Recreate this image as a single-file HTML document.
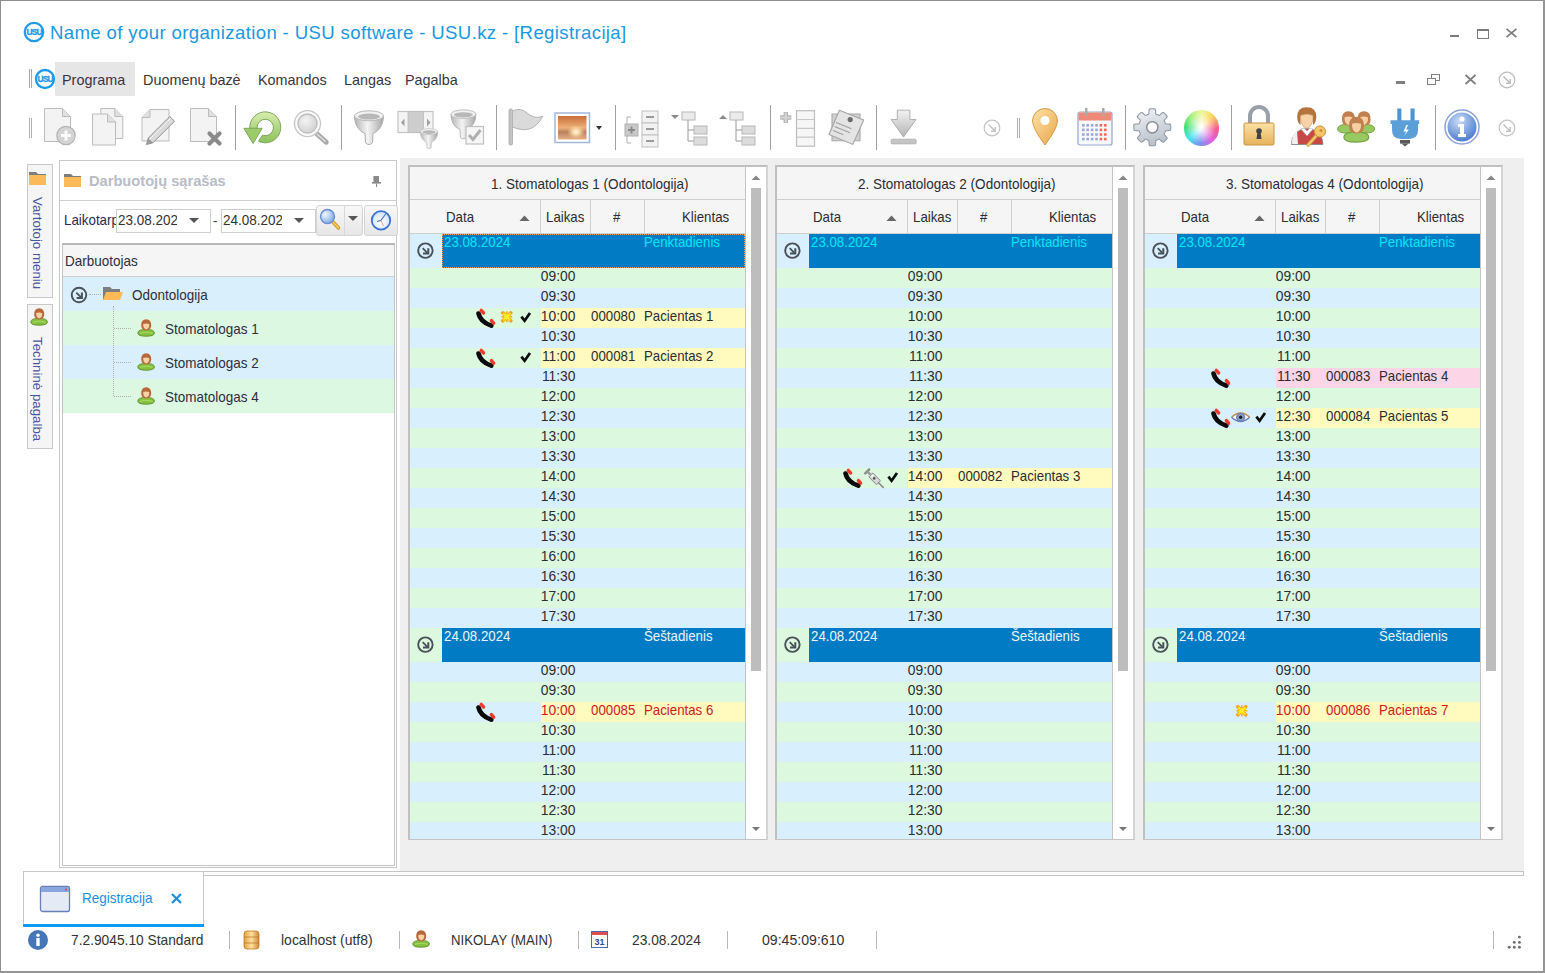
<!DOCTYPE html><html><head><meta charset="utf-8"><style>
html,body{margin:0;padding:0;}
body{width:1545px;height:973px;position:relative;overflow:hidden;background:#fff;font-family:"Liberation Sans", sans-serif;}
.t{position:absolute;white-space:pre;line-height:1;}
</style></head><body>
<div style="position:absolute;left:0px;top:0px;width:1545px;height:1px;background:#8f8f8f;"></div>
<div style="position:absolute;left:0px;top:0px;width:1px;height:973px;background:#8f8f8f;"></div>
<div style="position:absolute;left:1543px;top:0px;width:2px;height:973px;background:#959595;"></div>
<div style="position:absolute;left:0px;top:971px;width:1545px;height:2px;background:#959595;"></div>
<svg style="position:absolute;left:22px;top:20px;" width="24" height="24" viewBox="0 0 24 24"><circle cx="12" cy="12" r="9.2" fill="#fff" stroke="#1d9ae8" stroke-width="2.3"/><text x="12.2" y="15.0" font-family="Liberation Sans" font-weight="bold" font-size="8.4" fill="#1d9ae8" stroke="#1d9ae8" stroke-width="0.35" text-anchor="middle" letter-spacing="-0.7">USU</text></svg>
<div class="t" style="left:50px;top:23.86px;font-size:18.6px;color:#1b98e3;font-weight:normal;letter-spacing:0.36px;">Name of your organization - USU software - USU.kz - [Registracija]</div>
<div style="position:absolute;left:1450px;top:35px;width:9px;height:2px;background:#7a7a7a;"></div>
<div style="position:absolute;left:1477px;top:29px;width:10px;height:7px;border:1px solid #7a7a7a;border-top-width:2px;"></div>
<svg style="position:absolute;left:1505px;top:28px;" width="13" height="10" viewBox="0 0 13 10"><path d="M1.5 0.8 L11.5 9.2 M11.5 0.8 L1.5 9.2" stroke="#7a7a7a" stroke-width="1.6"/></svg>
<div style="position:absolute;left:29px;top:69px;width:1px;height:19px;background:#a8a8a8;"></div>
<div style="position:absolute;left:31px;top:69px;width:1px;height:19px;background:#a8a8a8;"></div>
<div style="position:absolute;left:55px;top:62px;width:80px;height:34px;background:#e6e6e6;"></div>
<svg style="position:absolute;left:34px;top:68px;" width="22" height="22" viewBox="0 0 22 22"><circle cx="11" cy="11" r="9.0" fill="#fff" stroke="#1d9ae8" stroke-width="2.3"/><text x="11.2" y="14.0" font-family="Liberation Sans" font-weight="bold" font-size="8.4" fill="#1d9ae8" stroke="#1d9ae8" stroke-width="0.35" text-anchor="middle" letter-spacing="-0.7">USU</text></svg>
<div class="t" style="left:62px;top:72.61px;font-size:14.4px;color:#3a3440;font-weight:normal;">Programa</div>
<div class="t" style="left:143px;top:72.61px;font-size:14.4px;color:#3a3440;font-weight:normal;">Duomenų bazė</div>
<div class="t" style="left:258px;top:72.61px;font-size:14.4px;color:#3a3440;font-weight:normal;">Komandos</div>
<div class="t" style="left:344px;top:72.61px;font-size:14.4px;color:#3a3440;font-weight:normal;">Langas</div>
<div class="t" style="left:405px;top:72.61px;font-size:14.4px;color:#3a3440;font-weight:normal;">Pagalba</div>
<div style="position:absolute;left:1396px;top:81px;width:9px;height:3px;background:#808080;"></div>
<div style="position:absolute;left:1431px;top:74px;width:7px;height:5px;border:1.5px solid #808080;"></div>
<div style="position:absolute;left:1427px;top:78px;width:7px;height:5px;border:1.5px solid #808080;background:#fff;"></div>
<svg style="position:absolute;left:1464px;top:74px;" width="13" height="11" viewBox="0 0 13 11"><path d="M1.5 1 L11.5 10 M11.5 1 L1.5 10" stroke="#808080" stroke-width="1.8"/></svg>
<svg style="position:absolute;left:1497px;top:70px;" width="20" height="20" viewBox="0 0 20 20"><circle cx="10" cy="10" r="7.8" fill="none" stroke="#bdbdbd" stroke-width="1.2"/><path d="M6.5 6.5 L13 13 M13.2 9 L13.2 13.2 L9 13.2" stroke="#bdbdbd" stroke-width="1.5" fill="none"/></svg>
<div style="position:absolute;left:29px;top:118px;width:1px;height:20px;background:#b0b0b0;"></div>
<div style="position:absolute;left:31px;top:118px;width:1px;height:20px;background:#b0b0b0;"></div>
<div style="position:absolute;left:235px;top:105px;width:1px;height:45px;background:#a0a0a0;"></div>
<div style="position:absolute;left:341px;top:105px;width:1px;height:45px;background:#a0a0a0;"></div>
<div style="position:absolute;left:496px;top:105px;width:1px;height:45px;background:#a0a0a0;"></div>
<div style="position:absolute;left:615px;top:105px;width:1px;height:45px;background:#a0a0a0;"></div>
<div style="position:absolute;left:770px;top:105px;width:1px;height:45px;background:#a0a0a0;"></div>
<div style="position:absolute;left:876px;top:105px;width:1px;height:45px;background:#a0a0a0;"></div>
<div style="position:absolute;left:1125px;top:105px;width:1px;height:45px;background:#a0a0a0;"></div>
<div style="position:absolute;left:1231px;top:105px;width:1px;height:45px;background:#a0a0a0;"></div>
<div style="position:absolute;left:1435px;top:105px;width:1px;height:45px;background:#a0a0a0;"></div>
<div style="position:absolute;left:1017px;top:118px;width:1px;height:20px;background:#b0b0b0;"></div>
<div style="position:absolute;left:1019px;top:118px;width:1px;height:20px;background:#b0b0b0;"></div>
<svg style="position:absolute;left:40px;top:105px;" width="40" height="44" viewBox="0 0 40 44"><path d="M4.5 3.5 L22.5 3.5 L30.5 11.5 L30.5 36.5 L4.5 36.5 Z" fill="#f3f3f3" stroke="#bcbcbc" stroke-width="1"/><path d="M22.5 3.5 L22.5 11.5 L30.5 11.5" fill="#e0e0e0" stroke="#bcbcbc" stroke-width="1"/><circle cx="26" cy="30.5" r="9.2" fill="#d4d4d4" stroke="#b4b4b4" stroke-width="1.2"/><path d="M26 25.5 V35.5 M21 30.5 H31" stroke="#fbfbfb" stroke-width="3"/></svg>
<svg style="position:absolute;left:88px;top:105px;" width="40" height="44" viewBox="0 0 40 44"><path d="M12.8 3.5 L26.799999999999997 3.5 L34.8 11.5 L34.8 33.5 L12.8 33.5 Z" fill="#f3f3f3" stroke="#bcbcbc" stroke-width="1"/><path d="M26.799999999999997 3.5 L26.799999999999997 11.5 L34.8 11.5" fill="#e0e0e0" stroke="#bcbcbc" stroke-width="1"/><path d="M4.5 9 L19.5 9 L27.5 17 L27.5 40 L4.5 40 Z" fill="#f3f3f3" stroke="#bcbcbc" stroke-width="1"/><path d="M19.5 9 L19.5 17 L27.5 17" fill="#e0e0e0" stroke="#bcbcbc" stroke-width="1"/></svg>
<svg style="position:absolute;left:137px;top:105px;" width="42" height="44" viewBox="0 0 42 44"><path d="M13 4.5 L32 4.5 L32 36.0 L5 36.0 L5 12.5 Z" fill="#f3f3f3" stroke="#bcbcbc" stroke-width="1"/><path d="M13 4.5 L13 12.5 L5 12.5" fill="#e0e0e0" stroke="#bcbcbc" stroke-width="1"/><path d="M9.5 39.5 L11.3 33 L32.8 11.5 L37.5 16.2 L16 37.7 Z" fill="#dadada" stroke="#8e8e8e" stroke-width="1"/><path d="M9.5 39.5 L11.3 33 L16 37.7 Z" fill="#9a9a9a"/><path d="M12.5 34.5 L34 13" stroke="#f4f4f4" stroke-width="1"/></svg>
<svg style="position:absolute;left:186px;top:105px;" width="40" height="44" viewBox="0 0 40 44"><path d="M4.5 3.5 L22.5 3.5 L30.5 11.5 L30.5 36.5 L4.5 36.5 Z" fill="#f3f3f3" stroke="#bcbcbc" stroke-width="1"/><path d="M22.5 3.5 L22.5 11.5 L30.5 11.5" fill="#e0e0e0" stroke="#bcbcbc" stroke-width="1"/><path d="M23.5 28.5 L33.5 38.5 M33.5 28.5 L23.5 38.5" stroke="#8a8a8a" stroke-width="4.2" stroke-linecap="round"/></svg>
<svg style="position:absolute;left:241px;top:105px;" width="44" height="44" viewBox="0 0 44 44"><defs><linearGradient id="gr" x1="0" y1="0" x2="0" y2="1"><stop offset="0" stop-color="#d8edb0"/><stop offset="1" stop-color="#8cc05a"/></linearGradient></defs><path d="M8.8 23.3 A15.5 15.5 0 1 1 17.5 36.3 L21.5 30.2 A8.2 8.2 0 1 0 16.1 23.3 Z" fill="url(#gr)" stroke="#7ea85a" stroke-width="1"/><path d="M2.9 23.3 L21.1 23.3 L12.1 38.5 Z" fill="#9ccc68" stroke="#7ea85a" stroke-width="1"/></svg>
<svg style="position:absolute;left:292px;top:105px;" width="40" height="44" viewBox="0 0 40 44"><defs><radialGradient id="lens" cx="0.4" cy="0.35" r="0.7"><stop offset="0" stop-color="#f4f4f4"/><stop offset="1" stop-color="#cfcfcf"/></radialGradient></defs><path d="M24.4 28.3 L34.2 37.2" stroke="#a9a9a9" stroke-width="5" stroke-linecap="round"/><path d="M25.5 29.5 L33 36.2" stroke="#dcdcdc" stroke-width="1.6" stroke-linecap="round"/><circle cx="15.5" cy="18.6" r="13" fill="#fbfbfb" stroke="#c6c6c6" stroke-width="1.3"/><circle cx="15.5" cy="18.6" r="9.6" fill="url(#lens)" stroke="#bcbcbc" stroke-width="1.3"/></svg>
<svg style="position:absolute;left:350px;top:105px;" width="38" height="44" viewBox="0 0 38 44"><defs><linearGradient id="fg1" x1="0" y1="0" x2="1" y2="0"><stop offset="0" stop-color="#b4b4b4"/><stop offset="0.45" stop-color="#f4f4f4"/><stop offset="1" stop-color="#a6a6a6"/></linearGradient></defs><g transform="translate(4,4.8) scale(1.0)"><path d="M0.5 6 C0.5 17, 7 22.5, 11 23.5 L11.5 33 Q15 36.5 18.5 33 L19 23.5 C23 22.5, 29.5 17, 29.5 6 Z" fill="url(#fg1)" stroke="#b0b0b0" stroke-width="1"/><ellipse cx="15" cy="6" rx="14.5" ry="5" fill="#f2f2f2" stroke="#b8b8b8" stroke-width="1"/><ellipse cx="15" cy="6.8" rx="11" ry="3" fill="#b8b8b8"/></g></svg>
<svg style="position:absolute;left:395px;top:105px;" width="46" height="44" viewBox="0 0 46 44"><defs><linearGradient id="fg2" x1="0" y1="0" x2="1" y2="0"><stop offset="0" stop-color="#b4b4b4"/><stop offset="0.45" stop-color="#f4f4f4"/><stop offset="1" stop-color="#a6a6a6"/></linearGradient></defs><rect x="3" y="6.5" width="35" height="21" fill="#f4f4f4" stroke="#c4c4c4" stroke-width="1.2"/><rect x="13" y="6.5" width="15.5" height="21" fill="#cdcdcd" stroke="#bdbdbd" stroke-width="0.8"/><path d="M9.5 13.5 L6 17.5 L9.5 21.5 Z M32 13.5 L35.5 17.5 L32 21.5 Z" fill="#a0a0a0"/><g transform="translate(25,23) scale(0.6)"><path d="M0.5 6 C0.5 17, 7 22.5, 11 23.5 L11.5 33 Q15 36.5 18.5 33 L19 23.5 C23 22.5, 29.5 17, 29.5 6 Z" fill="url(#fg2)" stroke="#b0b0b0" stroke-width="1"/><ellipse cx="15" cy="6" rx="14.5" ry="5" fill="#f2f2f2" stroke="#b8b8b8" stroke-width="1"/><ellipse cx="15" cy="6.8" rx="11" ry="3" fill="#b8b8b8"/></g></svg>
<svg style="position:absolute;left:447px;top:105px;" width="42" height="44" viewBox="0 0 42 44"><defs><linearGradient id="fg3" x1="0" y1="0" x2="1" y2="0"><stop offset="0" stop-color="#b4b4b4"/><stop offset="0.45" stop-color="#f4f4f4"/><stop offset="1" stop-color="#a6a6a6"/></linearGradient></defs><g transform="translate(3.5,4) scale(0.86)"><path d="M0.5 6 C0.5 17, 7 22.5, 11 23.5 L11.5 33 Q15 36.5 18.5 33 L19 23.5 C23 22.5, 29.5 17, 29.5 6 Z" fill="url(#fg3)" stroke="#b0b0b0" stroke-width="1"/><ellipse cx="15" cy="6" rx="14.5" ry="5" fill="#f2f2f2" stroke="#b8b8b8" stroke-width="1"/><ellipse cx="15" cy="6.8" rx="11" ry="3" fill="#b8b8b8"/></g><rect x="19" y="21.5" width="17.5" height="17.5" fill="#f6f6f6" stroke="#c0c0c0" stroke-width="1.2"/><path d="M22 30 L26 34.5 L33.5 25" stroke="#b0b0b0" stroke-width="3" fill="none"/></svg>
<svg style="position:absolute;left:505px;top:105px;" width="42" height="44" viewBox="0 0 42 44"><rect x="4" y="4" width="3.5" height="36" rx="1.5" fill="#c4c4c4" stroke="#a8a8a8" stroke-width="0.8"/><path d="M7.5 6 Q16 2 22 8 Q30 15 38 11 Q32 22 24 24 Q17 26 7.5 22 Z" fill="#dadada" stroke="#b4b4b4"/></svg>
<svg style="position:absolute;left:552px;top:105px;" width="52" height="44" viewBox="0 0 52 44"><defs><linearGradient id="sun" x1="0" y1="0" x2="0" y2="1"><stop offset="0" stop-color="#c86e3c"/><stop offset="0.5" stop-color="#eeb07a"/><stop offset="0.68" stop-color="#b88060"/><stop offset="1" stop-color="#e8b088"/></linearGradient><radialGradient id="glow" cx="0.5" cy="0.5" r="0.5"><stop offset="0" stop-color="#fffbe8"/><stop offset="0.4" stop-color="#ffe8b0" stop-opacity="0.8"/><stop offset="1" stop-color="#ffd090" stop-opacity="0"/></radialGradient></defs><rect x="3" y="8" width="34.5" height="29.5" fill="#fff" stroke="#a4b6dc" stroke-width="1.5"/><rect x="6" y="11" width="28.5" height="23.5" fill="url(#sun)"/><ellipse cx="24" cy="27" rx="9" ry="7" fill="url(#glow)"/><path d="M44 21 L50 21 L47 25 Z" fill="#333"/></svg>
<svg style="position:absolute;left:622px;top:105px;" width="42" height="44" viewBox="0 0 42 44"><path d="M9 12 L5 12 L5 38 L9 38" stroke="#b0b0b0" fill="none"/><rect x="3" y="19" width="13" height="12" fill="#c8c8c8" stroke="#b0b0b0"/><path d="M9.5 21.5 V28.5 M6 25 H13" stroke="#8a8a8a" stroke-width="2"/><rect x="20" y="6" width="16" height="12" fill="#f2f2f2" stroke="#c0c0c0"/><rect x="20" y="18" width="16" height="12" fill="#f2f2f2" stroke="#c0c0c0"/><rect x="20" y="30" width="16" height="12" fill="#f2f2f2" stroke="#c0c0c0"/><path d="M24 12 H32 M24 24 H32 M24 36 H32" stroke="#9a9a9a" stroke-width="2"/></svg>
<svg style="position:absolute;left:670px;top:102px;" width="40" height="46" viewBox="0 0 40 46"><path d="M1 13 L9 13 L5 17 Z" fill="#8a8a8a"/><rect x="12" y="10" width="13" height="8" fill="#eaeaea" stroke="#b8b8b8"/><path d="M18 18 V39 H24 M18 28 H24" stroke="#9a9a9a" fill="none"/><rect x="24" y="24" width="13" height="8" fill="#dcdcdc" stroke="#b8b8b8"/><rect x="24" y="35" width="13" height="8" fill="#dcdcdc" stroke="#b8b8b8"/></svg>
<svg style="position:absolute;left:718px;top:102px;" width="40" height="46" viewBox="0 0 40 46"><path d="M1 17 L9 17 L5 13 Z" fill="#8a8a8a"/><rect x="12" y="10" width="13" height="8" fill="#eaeaea" stroke="#b8b8b8"/><path d="M18 18 V39 H24 M18 28 H24" stroke="#9a9a9a" fill="none"/><rect x="24" y="24" width="13" height="8" fill="#dcdcdc" stroke="#b8b8b8"/><rect x="24" y="35" width="13" height="8" fill="#dcdcdc" stroke="#b8b8b8"/></svg>
<svg style="position:absolute;left:776px;top:105px;" width="42" height="44" viewBox="0 0 42 44"><path d="M9.8 7 V18 M4.3 12.5 H15.3" stroke="#b4b4b4" stroke-width="4.4"/><path d="M9.8 7.6 V17.4 M4.9 12.5 H14.7" stroke="#d4d4d4" stroke-width="2"/><rect x="20.5" y="5.7" width="18" height="35.5" fill="#f6f6f6" stroke="#bdbdbd" stroke-width="1.2"/><path d="M20.5 14.5 H38.5 M20.5 23.3 H38.5 M20.5 32.2 H38.5" stroke="#c8c8c8" stroke-width="1.2"/></svg>
<svg style="position:absolute;left:826px;top:105px;" width="42" height="44" viewBox="0 0 42 44"><path d="M6 9 L34 9 L34 35.7 L6 35.7 Z" fill="#d0d0d0" stroke="#a8a8a8" stroke-width="1.1"/><path d="M13.4 5.2 L37.7 15 L26.8 39.4 L3 29.5 Z" fill="#e4e4e4" stroke="#a4a4a4" stroke-width="1.1"/><circle cx="24.2" cy="14.6" r="2.6" fill="#6a6a6a"/><path d="M10 17.5 L25.5 23.8 M8.5 21.5 L24 27.8 M7 25.5 L17.5 29.7" stroke="#a0a0a0" stroke-width="1.2"/></svg>
<svg style="position:absolute;left:888px;top:105px;" width="32" height="44" viewBox="0 0 32 44"><defs><linearGradient id="dl" x1="0" y1="0" x2="0" y2="1"><stop offset="0" stop-color="#f2f2f2"/><stop offset="1" stop-color="#b4b4b4"/></linearGradient></defs><path d="M9.3 5.2 H21.8 V14.5 H28 L15.5 32.1 L3.1 14.5 H9.3 Z" fill="url(#dl)" stroke="#b0b0b0" stroke-width="1"/><rect x="3.1" y="34.2" width="25" height="4.7" rx="1" fill="#c4c4c4" stroke="#b0b0b0" stroke-width="0.8"/></svg>
<svg style="position:absolute;left:982px;top:118px;" width="20" height="20" viewBox="0 0 20 20"><circle cx="10" cy="10" r="7.8" fill="none" stroke="#c4c4c4" stroke-width="1.2"/><path d="M6.5 6.5 L13 13 M13.2 9 L13.2 13.2 L9 13.2" stroke="#c4c4c4" stroke-width="1.5" fill="none"/></svg>
<svg style="position:absolute;left:1029px;top:105px;" width="34" height="44" viewBox="0 0 34 44"><defs><linearGradient id="pin" x1="0" y1="0" x2="1" y2="1"><stop offset="0" stop-color="#fde3a8"/><stop offset="1" stop-color="#e9a64a"/></linearGradient></defs><path d="M16 40 Q4 24 3.5 16 A12.5 12.5 0 0 1 28.5 16 Q28 24 16 40 Z" fill="url(#pin)" stroke="#d59a45" stroke-width="1"/><circle cx="16" cy="15.5" r="4.5" fill="#fff"/></svg>
<svg style="position:absolute;left:1075px;top:104px;" width="40" height="44" viewBox="0 0 40 44"><rect x="3" y="8" width="34" height="33" rx="2" fill="#f6f8fc" stroke="#95a7cf" stroke-width="1.2"/><rect x="3.5" y="8.5" width="33" height="8" fill="#f08a78"/><rect x="10" y="4" width="2.5" height="8" fill="#aaa"/><rect x="27" y="4" width="2.5" height="8" fill="#aaa"/><rect x="7.0" y="20.0" width="2.6" height="2.6" fill="#9aa9d6"/><rect x="11.4" y="20.0" width="2.6" height="2.6" fill="#9aa9d6"/><rect x="15.8" y="20.0" width="2.6" height="2.6" fill="#9aa9d6"/><rect x="20.2" y="20.0" width="2.6" height="2.6" fill="#9aa9d6"/><rect x="24.6" y="20.0" width="2.6" height="2.6" fill="#f26a5a"/><rect x="29.0" y="20.0" width="2.6" height="2.6" fill="#f26a5a"/><rect x="7.0" y="24.6" width="2.6" height="2.6" fill="#9aa9d6"/><rect x="11.4" y="24.6" width="2.6" height="2.6" fill="#9aa9d6"/><rect x="15.8" y="24.6" width="2.6" height="2.6" fill="#9aa9d6"/><rect x="20.2" y="24.6" width="2.6" height="2.6" fill="#9aa9d6"/><rect x="24.6" y="24.6" width="2.6" height="2.6" fill="#f26a5a"/><rect x="29.0" y="24.6" width="2.6" height="2.6" fill="#f26a5a"/><rect x="7.0" y="29.2" width="2.6" height="2.6" fill="#9aa9d6"/><rect x="11.4" y="29.2" width="2.6" height="2.6" fill="#9aa9d6"/><rect x="15.8" y="29.2" width="2.6" height="2.6" fill="#9aa9d6"/><rect x="20.2" y="29.2" width="2.6" height="2.6" fill="#9aa9d6"/><rect x="24.6" y="29.2" width="2.6" height="2.6" fill="#f26a5a"/><rect x="29.0" y="29.2" width="2.6" height="2.6" fill="#f26a5a"/><rect x="7.0" y="33.8" width="2.6" height="2.6" fill="#9aa9d6"/><rect x="11.4" y="33.8" width="2.6" height="2.6" fill="#9aa9d6"/><rect x="15.8" y="33.8" width="2.6" height="2.6" fill="#9aa9d6"/><rect x="20.2" y="33.8" width="2.6" height="2.6" fill="#9aa9d6"/><rect x="24.6" y="33.8" width="2.6" height="2.6" fill="#f26a5a"/><rect x="29.0" y="33.8" width="2.6" height="2.6" fill="#f26a5a"/></svg>
<svg style="position:absolute;left:1133px;top:105px;" width="40" height="44" viewBox="0 0 40 44"><defs><linearGradient id="gg" x1="0" y1="0" x2="0.3" y2="1"><stop offset="0" stop-color="#f2f4f8"/><stop offset="1" stop-color="#bcc2cc"/></linearGradient></defs><g transform="translate(19.3,22.3)"><polygon points="18.50,0.00 18.49,0.48 18.47,0.97 18.44,1.45 18.40,1.93 18.34,2.41 18.24,2.89 17.31,3.21 15.66,3.33 14.07,3.38 13.18,3.53 13.04,3.86 12.93,4.20 12.82,4.54 12.70,4.87 12.56,5.20 12.42,5.53 12.28,5.85 12.12,6.17 11.95,6.49 11.82,6.82 12.33,7.56 13.43,8.72 14.51,9.97 14.94,10.86 14.68,11.26 14.38,11.64 14.07,12.01 13.75,12.38 13.42,12.73 13.08,13.08 12.73,13.42 12.38,13.75 12.01,14.07 11.64,14.38 11.26,14.68 10.86,14.94 9.97,14.51 8.72,13.43 7.56,12.33 6.82,11.82 6.49,11.95 6.17,12.12 5.85,12.28 5.53,12.42 5.20,12.56 4.87,12.70 4.54,12.82 4.20,12.93 3.86,13.04 3.53,13.18 3.38,14.07 3.33,15.66 3.21,17.31 2.89,18.24 2.41,18.34 1.93,18.40 1.45,18.44 0.97,18.47 0.48,18.49 0.00,18.50 -0.48,18.49 -0.97,18.47 -1.45,18.44 -1.93,18.40 -2.41,18.34 -2.89,18.24 -3.21,17.31 -3.33,15.66 -3.38,14.07 -3.53,13.18 -3.86,13.04 -4.20,12.93 -4.54,12.82 -4.87,12.70 -5.20,12.56 -5.53,12.42 -5.85,12.28 -6.17,12.12 -6.49,11.95 -6.82,11.82 -7.56,12.33 -8.72,13.43 -9.97,14.51 -10.86,14.94 -11.26,14.68 -11.64,14.38 -12.01,14.07 -12.38,13.75 -12.73,13.42 -13.08,13.08 -13.42,12.73 -13.75,12.38 -14.07,12.01 -14.38,11.64 -14.68,11.26 -14.94,10.86 -14.51,9.97 -13.43,8.72 -12.33,7.56 -11.82,6.82 -11.95,6.49 -12.12,6.17 -12.28,5.85 -12.42,5.53 -12.56,5.20 -12.70,4.87 -12.82,4.54 -12.93,4.20 -13.04,3.86 -13.18,3.53 -14.07,3.38 -15.66,3.33 -17.31,3.21 -18.24,2.89 -18.34,2.41 -18.40,1.93 -18.44,1.45 -18.47,0.97 -18.49,0.48 -18.50,0.00 -18.49,-0.48 -18.47,-0.97 -18.44,-1.45 -18.40,-1.93 -18.34,-2.41 -18.24,-2.89 -17.31,-3.21 -15.66,-3.33 -14.07,-3.38 -13.18,-3.53 -13.04,-3.86 -12.93,-4.20 -12.82,-4.54 -12.70,-4.87 -12.56,-5.20 -12.42,-5.53 -12.28,-5.85 -12.12,-6.17 -11.95,-6.49 -11.82,-6.82 -12.33,-7.56 -13.43,-8.72 -14.51,-9.97 -14.94,-10.86 -14.68,-11.26 -14.38,-11.64 -14.07,-12.01 -13.75,-12.38 -13.42,-12.73 -13.08,-13.08 -12.73,-13.42 -12.38,-13.75 -12.01,-14.07 -11.64,-14.38 -11.26,-14.68 -10.86,-14.94 -9.97,-14.51 -8.72,-13.43 -7.56,-12.33 -6.82,-11.82 -6.49,-11.95 -6.17,-12.12 -5.85,-12.28 -5.53,-12.42 -5.20,-12.56 -4.87,-12.70 -4.54,-12.82 -4.20,-12.93 -3.86,-13.04 -3.53,-13.18 -3.38,-14.07 -3.33,-15.66 -3.21,-17.31 -2.89,-18.24 -2.41,-18.34 -1.93,-18.40 -1.45,-18.44 -0.97,-18.47 -0.48,-18.49 -0.00,-18.50 0.48,-18.49 0.97,-18.47 1.45,-18.44 1.93,-18.40 2.41,-18.34 2.89,-18.24 3.21,-17.31 3.33,-15.66 3.38,-14.07 3.53,-13.18 3.86,-13.04 4.20,-12.93 4.54,-12.82 4.87,-12.70 5.20,-12.56 5.53,-12.42 5.85,-12.28 6.17,-12.12 6.49,-11.95 6.82,-11.82 7.56,-12.33 8.72,-13.43 9.97,-14.51 10.86,-14.94 11.26,-14.68 11.64,-14.38 12.01,-14.07 12.38,-13.75 12.73,-13.42 13.08,-13.08 13.42,-12.73 13.75,-12.38 14.07,-12.01 14.38,-11.64 14.68,-11.26 14.94,-10.86 14.51,-9.97 13.43,-8.72 12.33,-7.56 11.82,-6.82 11.95,-6.49 12.12,-6.17 12.28,-5.85 12.42,-5.53 12.56,-5.20 12.70,-4.87 12.82,-4.54 12.93,-4.20 13.04,-3.86 13.18,-3.53 14.07,-3.38 15.66,-3.33 17.31,-3.21 18.24,-2.89 18.34,-2.41 18.40,-1.93 18.44,-1.45 18.47,-0.97 18.49,-0.48" fill="url(#gg)" stroke="#939aa6" stroke-width="1.1"/><circle r="5.6" fill="#fff" stroke="#8a919c" stroke-width="1.5"/></g></svg>
<div style="position:absolute;left:1183.5px;top:110px;width:35.5px;height:35.5px;border-radius:50%;background:radial-gradient(circle at 48% 50%, #fff 0%, rgba(255,255,255,0.85) 12%, rgba(255,255,255,0) 60%), conic-gradient(#eef8a0, #ffd860 40deg, #f45890 95deg, #e060e0 140deg, #7a90f0 185deg, #40e4f0 230deg, #40e070 275deg, #a8f080 320deg, #eef8a0);"></div>
<svg style="position:absolute;left:1240px;top:103px;" width="38" height="46" viewBox="0 0 38 46"><path d="M10 20 V13 A9 9 0 0 1 28 13 V20" fill="none" stroke="#9aa0a8" stroke-width="4"/><defs><linearGradient id="lk" x1="0" y1="0" x2="0" y2="1"><stop offset="0" stop-color="#fbe2a4"/><stop offset="1" stop-color="#e6b35c"/></linearGradient></defs><rect x="4" y="20" width="30" height="22" rx="1.5" fill="url(#lk)" stroke="#c99240"/><circle cx="19" cy="28" r="2.8" fill="#444"/><path d="M17.5 29 L16.5 36 H21.5 L20.5 29 Z" fill="#444"/></svg>
<svg style="position:absolute;left:1288px;top:103px;" width="42" height="46" viewBox="0 0 42 46"><path d="M3.5 41.5 Q3.5 27 19 25.5 Q34.5 27 35 41.5 Z" fill="#c84848" stroke="#8a8a8a" stroke-width="0.9"/><path d="M3.8 41 Q4 30 9 28 L10 41 Z" fill="#f0f0f0"/><path d="M13 26 L19 33 L25 26 L22 25 L19 28 L16 25 Z" fill="#fff" stroke="#aaa" stroke-width="0.6"/><path d="M9.2 14 Q9 4.2 18.8 4.2 Q28.5 4.2 28.3 14 Q28 20 25 22 L25 13 Q19 10 12.5 13 L12.5 22 Q9.4 20 9.2 14 Z" fill="#b5733e"/><path d="M12.5 12.5 Q19 9.5 25 12.5 Q25.5 23 18.8 25.5 Q12 23 12.5 12.5 Z" fill="#f6d2a6" stroke="#c0906a" stroke-width="0.6"/><path d="M29 32 L20 42" stroke="#d8a040" stroke-width="3.6" stroke-linecap="round"/><path d="M29 32 L20 42" stroke="#f8d070" stroke-width="1.6" stroke-linecap="round"/><circle cx="32" cy="28.5" r="5.6" fill="#f4c668" stroke="#c8923a" stroke-width="1"/><circle cx="33" cy="27.5" r="1.5" fill="#c8923a"/></svg>
<svg style="position:absolute;left:1334px;top:103px;" width="44" height="46" viewBox="0 0 44 46"><g transform="translate(2.5,7.8) scale(1.3)"><path d="M0.8 14 Q0.8 10.4 9 10.4 Q17.4 10.4 17.4 14 Q17.4 17.2 9 17.2 Q0.8 17.2 0.8 14 Z" fill="#98c860" stroke="#6e9e40" stroke-width="0.7"/><path d="M4.2 6.8 Q4 0.3 9.2 0.3 Q14.4 0.3 14.2 6.8 Q14 10 12 10.8 Q9 12 6.3 10.8 Q4.4 10 4.2 6.8 Z" fill="#c08050"/><path d="M6.2 5 Q9 3.8 12.2 5 Q12.6 9.8 9.2 11 Q6 9.8 6.2 5 Z" fill="#f6d0a2"/></g><g transform="translate(18.1,7.8) scale(1.3)"><path d="M0.8 14 Q0.8 10.4 9 10.4 Q17.4 10.4 17.4 14 Q17.4 17.2 9 17.2 Q0.8 17.2 0.8 14 Z" fill="#98c860" stroke="#6e9e40" stroke-width="0.7"/><path d="M4.2 6.8 Q4 0.3 9.2 0.3 Q14.4 0.3 14.2 6.8 Q14 10 12 10.8 Q9 12 6.3 10.8 Q4.4 10 4.2 6.8 Z" fill="#c08050"/><path d="M6.2 5 Q9 3.8 12.2 5 Q12.6 9.8 9.2 11 Q6 9.8 6.2 5 Z" fill="#f6d0a2"/></g><g transform="translate(8.7,13.3) scale(1.5)"><path d="M0.8 14 Q0.8 10.4 9 10.4 Q17.4 10.4 17.4 14 Q17.4 17.2 9 17.2 Q0.8 17.2 0.8 14 Z" fill="#98c860" stroke="#6e9e40" stroke-width="0.7"/><path d="M4.2 6.8 Q4 0.3 9.2 0.3 Q14.4 0.3 14.2 6.8 Q14 10 12 10.8 Q9 12 6.3 10.8 Q4.4 10 4.2 6.8 Z" fill="#c08050"/><path d="M6.2 5 Q9 3.8 12.2 5 Q12.6 9.8 9.2 11 Q6 9.8 6.2 5 Z" fill="#f6d0a2"/></g></svg>
<svg style="position:absolute;left:1388px;top:103px;" width="34" height="48" viewBox="0 0 34 48"><rect x="9.3" y="5.5" width="4.1" height="13" fill="#4f94d0"/><rect x="22.5" y="5.5" width="4.1" height="13" fill="#4f94d0"/><path d="M2.5 17.3 H31.2 V21 H30 V27 Q30 35.9 21 35.9 H13 Q4 35.9 4 27 V21 H2.5 Z" fill="#5c9fd8"/><path d="M18.5 22 L15.5 28.5 H18.3 L16.3 33 L20.8 26.5 H18 L20 22 Z" fill="#fff"/><rect x="12" y="37" width="10" height="3.6" fill="#5a5a5a"/><path d="M13.5 40.5 H20.5 L17 43.5 Z" fill="#5a5a5a"/></svg>
<svg style="position:absolute;left:1442px;top:105px;" width="40" height="44" viewBox="0 0 40 44"><defs><radialGradient id="inf" cx="0.4" cy="0.3" r="0.8"><stop offset="0" stop-color="#c8dcf8"/><stop offset="1" stop-color="#3f70c8"/></radialGradient></defs><circle cx="20" cy="22" r="17" fill="#fff" stroke="#8aa4d8" stroke-width="1.5"/><circle cx="20" cy="22" r="14.5" fill="url(#inf)"/><circle cx="20" cy="14" r="2.6" fill="#fff"/><path d="M16 19 H22 V29 H24 V32 H16 V29 H18 V22 H16 Z" fill="#fff"/></svg>
<svg style="position:absolute;left:1497px;top:118px;" width="20" height="20" viewBox="0 0 20 20"><circle cx="10" cy="10" r="7.8" fill="none" stroke="#c4c4c4" stroke-width="1.2"/><path d="M6.5 6.5 L13 13 M13.2 9 L13.2 13.2 L9 13.2" stroke="#c4c4c4" stroke-width="1.5" fill="none"/></svg>
<div style="position:absolute;left:400px;top:158px;width:1124px;height:713px;background:#efefef;"></div>
<div style="position:absolute;left:23px;top:871px;width:1501px;height:1px;background:#c4c4c4;"></div>
<div style="position:absolute;left:203px;top:875px;width:1321px;height:1px;background:#c4c4c4;"></div>
<div style="position:absolute;left:1523px;top:871px;width:1px;height:5px;background:#c4c4c4;"></div>
<div style="position:absolute;left:27px;top:164px;width:24px;height:132px;border:1px solid #c8c8c8;background:#f5f5f5;"></div>
<svg style="position:absolute;left:28px;top:170px;" width="20" height="16" viewBox="0 0 20 16"><path d="M1 2 H8 L10 4 H18 V15 H1 Z" fill="#7d7d7d"/><rect x="1" y="5" width="17" height="10" fill="#fbb957"/></svg>
<div class="t" style="left:31px;top:197px;font-size:13.3px;color:#4656a0;writing-mode:vertical-rl;">Vartotojo meniu</div>
<div style="position:absolute;left:27px;top:304px;width:24px;height:143px;border:1px solid #c8c8c8;background:#f5f5f5;"></div>
<svg style="position:absolute;left:29px;top:307px;" width="20" height="20" viewBox="0 0 20 20"><g transform="translate(1,1) scale(1.0)"><path d="M0.8 14 Q0.8 10.4 9 10.4 Q17.4 10.4 17.4 14 Q17.4 17.2 9 17.2 Q0.8 17.2 0.8 14 Z" fill="#86c040" stroke="#5a8e2c" stroke-width="0.9"/><path d="M3 14.5 Q9 12 15.5 14.5" stroke="#a8dc60" stroke-width="1.2" fill="none"/><path d="M4.2 6.8 Q4 0.3 9.2 0.3 Q14.4 0.3 14.2 6.8 Q14 10 12 10.8 Q9 12 6.3 10.8 Q4.4 10 4.2 6.8 Z" fill="#b8683a"/><path d="M6.2 5 Q9 3.8 12.2 5 Q12.6 9.5 9.2 10.6 Q6 9.5 6.2 5 Z" fill="#f6d2a4"/></g></svg>
<div class="t" style="left:31px;top:337px;font-size:13.3px;color:#4656a0;writing-mode:vertical-rl;">Techninė pagalba</div>
<div style="position:absolute;left:59px;top:160px;width:336px;height:706px;border:1px solid #c8c8c8;background:#fff;"></div>
<div style="position:absolute;left:60px;top:200px;width:336px;height:1px;background:#d0d0d0;"></div>
<svg style="position:absolute;left:63px;top:172px;" width="20" height="16" viewBox="0 0 20 16"><path d="M1 2 H8 L10 4 H18 V15 H1 Z" fill="#7d7d7d"/><rect x="1" y="5" width="17" height="10" fill="#fbb957"/></svg>
<div class="t" style="left:89px;top:173.87px;font-size:14.8px;color:#b8bcc6;font-weight:bold;transform:scaleX(0.99);transform-origin:0 0;">Darbuotojų sąrašas</div>
<svg style="position:absolute;left:371px;top:175px;" width="12" height="13" viewBox="0 0 12 13"><rect x="3" y="1" width="5" height="6" fill="#8a8a8a"/><rect x="2" y="1" width="1" height="6" fill="#bbb"/><rect x="1" y="7" width="9" height="1.6" fill="#8a8a8a"/><rect x="5" y="8.5" width="1.1" height="3.5" fill="#8a8a8a"/></svg>
<div class="t" style="left:64px;top:212.98px;font-size:14.2px;color:#2a2a55;font-weight:normal;transform:scaleX(0.94);transform-origin:0 0;">Laikotarp</div>
<div style="position:absolute;left:116px;top:209px;width:93px;height:22px;border:1px solid #cfcfcf;background:#fff;overflow:hidden;"><div class="t" style="left:1px;top:3px;font-size:14.2px;color:#333;transform:scaleX(0.95);transform-origin:0 0;">23.08.2024</div></div>
<div style="position:absolute;left:177px;top:211px;width:10px;height:19px;background:#fff;"></div>
<svg style="position:absolute;left:188px;top:217px;" width="12" height="8" viewBox="0 0 12 8"><path d="M1 1 H11 L6 6 Z" fill="#555"/></svg>
<div class="t" style="left:213px;top:213.74px;font-size:13.3px;color:#333;font-weight:normal;">-</div>
<div style="position:absolute;left:221px;top:209px;width:93px;height:22px;border:1px solid #cfcfcf;background:#fff;overflow:hidden;"><div class="t" style="left:1px;top:3px;font-size:14.2px;color:#333;transform:scaleX(0.95);transform-origin:0 0;">24.08.2024</div></div>
<div style="position:absolute;left:281.5px;top:211px;width:10px;height:19px;background:#fff;"></div>
<svg style="position:absolute;left:293px;top:217px;" width="12" height="8" viewBox="0 0 12 8"><path d="M1 1 H11 L6 6 Z" fill="#555"/></svg>
<div style="position:absolute;left:316px;top:205px;width:45px;height:29px;border:1px solid #d4d4d4;border-radius:3px;background:linear-gradient(#f8f8f8,#e6e6e6);"></div>
<div style="position:absolute;left:344px;top:206px;width:1px;height:29px;background:#d8d8d8;"></div>
<svg style="position:absolute;left:318px;top:207px;" width="28" height="26" viewBox="0 0 28 26"><defs><radialGradient id="sl" cx="0.35" cy="0.35" r="0.7"><stop offset="0" stop-color="#f4f9ff"/><stop offset="1" stop-color="#7aa8e8"/></radialGradient></defs><path d="M14.5 14.5 L20.5 21" stroke="#d49a28" stroke-width="3.6" stroke-linecap="round"/><path d="M14.5 14.5 L20.5 21" stroke="#f8d060" stroke-width="1.4" stroke-linecap="round"/><circle cx="9.5" cy="9.5" r="7" fill="url(#sl)" stroke="#6a8ed0" stroke-width="1.4"/></svg>
<svg style="position:absolute;left:346px;top:215px;" width="14" height="8" viewBox="0 0 14 8"><path d="M2 1 H12 L7 6 Z" fill="#555"/></svg>
<div style="position:absolute;left:364px;top:205px;width:32px;height:29px;border:1px solid #d4d4d4;border-radius:3px;background:linear-gradient(#f8f8f8,#e6e6e6);"></div>
<svg style="position:absolute;left:366px;top:206px;" width="28" height="28" viewBox="0 0 28 28"><defs><radialGradient id="ck" cx="0.5" cy="0.6" r="0.6"><stop offset="0" stop-color="#ffffff"/><stop offset="1" stop-color="#cfe0fa"/></radialGradient></defs><circle cx="15" cy="14.4" r="9.2" fill="url(#ck)" stroke="#3a70d0" stroke-width="1.8"/><path d="M15 14.4 L20 7.5" stroke="#4a78d0" stroke-width="1.1"/><path d="M15 14.4 L17.5 20" stroke="#f0a080" stroke-width="1"/><path d="M15 14.4 L11 15.5" stroke="#4a78d0" stroke-width="1.1"/></svg>
<div style="position:absolute;left:62px;top:243px;width:331px;height:620px;border:1px solid #c4c4c4;border-top:2px solid #b8b8b8;background:#fff;"></div>
<div style="position:absolute;left:63px;top:245px;width:331px;height:31px;background:#f5f5f5;"></div>
<div style="position:absolute;left:63px;top:276px;width:331px;height:1px;background:#cfcfcf;"></div>
<div class="t" style="left:65px;top:253.98px;font-size:14.2px;color:#2e2e40;font-weight:normal;transform:scaleX(0.95);transform-origin:0 0;">Darbuotojas</div>
<div style="position:absolute;left:63px;top:277px;width:331px;height:34px;background:#d9effc;"></div>
<div style="position:absolute;left:63px;top:311px;width:331px;height:34px;background:#ddf8e2;"></div>
<div style="position:absolute;left:63px;top:345px;width:331px;height:34px;background:#d9effc;"></div>
<div style="position:absolute;left:63px;top:379px;width:331px;height:34px;background:#ddf8e2;"></div>
<svg style="position:absolute;left:70px;top:286px;" width="18" height="18" viewBox="0 0 18 18"><circle cx="9" cy="9" r="7.249999999999999" fill="none" stroke="#4a5058" stroke-width="1.9"/><path d="M6.3 6.6 L11.4 11.7" stroke="#4a5058" stroke-width="1.8" fill="none"/><path d="M11.9 6.6 V11.9 H6.6" stroke="#4a5058" stroke-width="2" fill="none"/></svg>
<div style="position:absolute;left:89px;top:294px;width:12px;height:0;border-top:1px dotted #b0b0b0;"></div>
<div style="position:absolute;left:113px;top:306px;width:0;height:90px;border-left:1px dotted #b0b0b0;"></div>
<div style="position:absolute;left:114px;top:328px;width:17px;height:0;border-top:1px dotted #b0b0b0;"></div>
<div style="position:absolute;left:114px;top:362px;width:17px;height:0;border-top:1px dotted #b0b0b0;"></div>
<div style="position:absolute;left:114px;top:396px;width:17px;height:0;border-top:1px dotted #b0b0b0;"></div>
<svg style="position:absolute;left:102px;top:285px;" width="22" height="18" viewBox="0 0 22 18"><path d="M1 2 H8 L10 4 H18 V15 H1 Z" fill="#7d7d7d"/><path d="M1 15 L4 7 H21 L18 15 Z" fill="#fbb957"/></svg>
<div class="t" style="left:132px;top:287.98px;font-size:14.2px;color:#2e2e40;font-weight:normal;transform:scaleX(0.95);transform-origin:0 0;">Odontologija</div>
<svg style="position:absolute;left:136px;top:318px;" width="20" height="20" viewBox="0 0 20 20"><g transform="translate(1,1) scale(1.0)"><path d="M0.8 14 Q0.8 10.4 9 10.4 Q17.4 10.4 17.4 14 Q17.4 17.2 9 17.2 Q0.8 17.2 0.8 14 Z" fill="#86c040" stroke="#5a8e2c" stroke-width="0.9"/><path d="M3 14.5 Q9 12 15.5 14.5" stroke="#a8dc60" stroke-width="1.2" fill="none"/><path d="M4.2 6.8 Q4 0.3 9.2 0.3 Q14.4 0.3 14.2 6.8 Q14 10 12 10.8 Q9 12 6.3 10.8 Q4.4 10 4.2 6.8 Z" fill="#b8683a"/><path d="M6.2 5 Q9 3.8 12.2 5 Q12.6 9.5 9.2 10.6 Q6 9.5 6.2 5 Z" fill="#f6d2a4"/></g></svg>
<div class="t" style="left:165px;top:321.98px;font-size:14.2px;color:#2e2e40;font-weight:normal;transform:scaleX(0.95);transform-origin:0 0;">Stomatologas 1</div>
<svg style="position:absolute;left:136px;top:352px;" width="20" height="20" viewBox="0 0 20 20"><g transform="translate(1,1) scale(1.0)"><path d="M0.8 14 Q0.8 10.4 9 10.4 Q17.4 10.4 17.4 14 Q17.4 17.2 9 17.2 Q0.8 17.2 0.8 14 Z" fill="#86c040" stroke="#5a8e2c" stroke-width="0.9"/><path d="M3 14.5 Q9 12 15.5 14.5" stroke="#a8dc60" stroke-width="1.2" fill="none"/><path d="M4.2 6.8 Q4 0.3 9.2 0.3 Q14.4 0.3 14.2 6.8 Q14 10 12 10.8 Q9 12 6.3 10.8 Q4.4 10 4.2 6.8 Z" fill="#b8683a"/><path d="M6.2 5 Q9 3.8 12.2 5 Q12.6 9.5 9.2 10.6 Q6 9.5 6.2 5 Z" fill="#f6d2a4"/></g></svg>
<div class="t" style="left:165px;top:355.98px;font-size:14.2px;color:#2e2e40;font-weight:normal;transform:scaleX(0.95);transform-origin:0 0;">Stomatologas 2</div>
<svg style="position:absolute;left:136px;top:386px;" width="20" height="20" viewBox="0 0 20 20"><g transform="translate(1,1) scale(1.0)"><path d="M0.8 14 Q0.8 10.4 9 10.4 Q17.4 10.4 17.4 14 Q17.4 17.2 9 17.2 Q0.8 17.2 0.8 14 Z" fill="#86c040" stroke="#5a8e2c" stroke-width="0.9"/><path d="M3 14.5 Q9 12 15.5 14.5" stroke="#a8dc60" stroke-width="1.2" fill="none"/><path d="M4.2 6.8 Q4 0.3 9.2 0.3 Q14.4 0.3 14.2 6.8 Q14 10 12 10.8 Q9 12 6.3 10.8 Q4.4 10 4.2 6.8 Z" fill="#b8683a"/><path d="M6.2 5 Q9 3.8 12.2 5 Q12.6 9.5 9.2 10.6 Q6 9.5 6.2 5 Z" fill="#f6d2a4"/></g></svg>
<div class="t" style="left:165px;top:389.98px;font-size:14.2px;color:#2e2e40;font-weight:normal;transform:scaleX(0.95);transform-origin:0 0;">Stomatologas 4</div>
<div style="position:absolute;left:408px;top:165px;width:356px;height:672px;border:2px solid #c0c0c0;border-right-color:#d4d4d4;border-bottom:1px solid #c4c4c4;background:#fff;overflow:hidden;">
<div style="position:absolute;left:0px;top:0px;width:335px;height:32px;background:#f5f5f5;"></div>
<div style="position:absolute;left:0px;top:32px;width:335px;height:1px;background:#cfcfcf;"></div>
<div style="position:absolute;left:0px;top:33px;width:335px;height:33px;background:#f5f5f5;"></div>
<div style="position:absolute;left:0px;top:66px;width:335px;height:1px;background:#cfcfcf;"></div>
<div style="position:absolute;left:130px;top:33px;width:1px;height:33px;background:#cfcfcf;"></div>
<div style="position:absolute;left:180px;top:33px;width:1px;height:33px;background:#cfcfcf;"></div>
<div style="position:absolute;left:234px;top:33px;width:1px;height:33px;background:#cfcfcf;"></div>
<div style="position:absolute;left:335px;top:0px;width:1px;height:673px;background:#c4c4c8;"></div>
<div class="t" style="left:80.50px;top:9.58px;font-size:14.2px;color:#2c2c32;transform:scaleX(0.952);transform-origin:0 0;">1. Stomatologas 1 (Odontologija)</div>
<div class="t" style="left:36.00px;top:43.38px;font-size:14.2px;color:#2c2c32;transform:scaleX(0.935);transform-origin:0 0;">Data</div>
<svg style="position:absolute;left:109px;top:48px" width="11" height="7"><path d="M0.5 6 L10.5 6 L5.5 0.5 Z" fill="#666"/></svg>
<div class="t" style="left:136.00px;top:43.38px;font-size:14.2px;color:#2c2c32;transform:scaleX(0.935);transform-origin:0 0;">Laikas</div>
<div class="t" style="left:203.00px;top:43.38px;font-size:14.2px;color:#2c2c32;transform:scaleX(0.935);transform-origin:0 0;">#</div>
<div class="t" style="left:272.00px;top:43.38px;font-size:14.2px;color:#2c2c32;transform:scaleX(0.935);transform-origin:0 0;">Klientas</div>
<div style="position:absolute;left:0px;top:67px;width:32px;height:34px;background:#d8effd;"></div>
<div style="position:absolute;left:32px;top:67px;width:303px;height:34px;background:#017cc4;"></div>
<div style="position:absolute;left:32px;top:67px;width:301px;height:32px;border:1px dotted #f0a060;"></div>
<div class="t" style="left:33.50px;top:68.38px;font-size:14.2px;color:#00e6f6;transform:scaleX(0.935);transform-origin:0 0;">23.08.2024</div>
<div class="t" style="left:234.00px;top:68.38px;font-size:14.2px;color:#00e6f6;transform:scaleX(0.935);transform-origin:0 0;">Penktadienis</div>
<div style="position:absolute;left:0px;top:101px;width:335px;height:20px;background:#dcf9e0;"></div>
<div class="t" style="left:111px;width:54.5px;text-align:right;top:102.18px;font-size:14.2px;color:#2c2c32;transform:scaleX(0.975);transform-origin:100% 0;">09:00</div>
<div style="position:absolute;left:0px;top:121px;width:335px;height:20px;background:#d8effd;"></div>
<div class="t" style="left:111px;width:54.5px;text-align:right;top:122.18px;font-size:14.2px;color:#2c2c32;transform:scaleX(0.975);transform-origin:100% 0;">09:30</div>
<div style="position:absolute;left:0px;top:141px;width:335px;height:20px;background:#dcf9e0;"></div>
<div style="position:absolute;left:131px;top:141px;width:204px;height:20px;background:#fffbbf;"></div>
<div class="t" style="left:111px;width:54.5px;text-align:right;top:142.18px;font-size:14.2px;color:#2c2c32;transform:scaleX(0.975);transform-origin:100% 0;">10:00</div>
<div class="t" style="left:181.00px;top:142.18px;font-size:14.2px;color:#2c2c32;transform:scaleX(0.935);transform-origin:0 0;">000080</div>
<div class="t" style="left:234.00px;top:142.18px;font-size:14.2px;color:#2c2c32;transform:scaleX(0.935);transform-origin:0 0;">Pacientas 1</div>
<div style="position:absolute;left:0px;top:161px;width:335px;height:20px;background:#d8effd;"></div>
<div class="t" style="left:111px;width:54.5px;text-align:right;top:162.18px;font-size:14.2px;color:#2c2c32;transform:scaleX(0.975);transform-origin:100% 0;">10:30</div>
<div style="position:absolute;left:0px;top:181px;width:335px;height:20px;background:#dcf9e0;"></div>
<div style="position:absolute;left:131px;top:181px;width:204px;height:20px;background:#fffbbf;"></div>
<div class="t" style="left:111px;width:54.5px;text-align:right;top:182.18px;font-size:14.2px;color:#2c2c32;transform:scaleX(0.975);transform-origin:100% 0;">11:00</div>
<div class="t" style="left:181.00px;top:182.18px;font-size:14.2px;color:#2c2c32;transform:scaleX(0.935);transform-origin:0 0;">000081</div>
<div class="t" style="left:234.00px;top:182.18px;font-size:14.2px;color:#2c2c32;transform:scaleX(0.935);transform-origin:0 0;">Pacientas 2</div>
<div style="position:absolute;left:0px;top:201px;width:335px;height:20px;background:#d8effd;"></div>
<div class="t" style="left:111px;width:54.5px;text-align:right;top:202.18px;font-size:14.2px;color:#2c2c32;transform:scaleX(0.975);transform-origin:100% 0;">11:30</div>
<div style="position:absolute;left:0px;top:221px;width:335px;height:20px;background:#dcf9e0;"></div>
<div class="t" style="left:111px;width:54.5px;text-align:right;top:222.18px;font-size:14.2px;color:#2c2c32;transform:scaleX(0.975);transform-origin:100% 0;">12:00</div>
<div style="position:absolute;left:0px;top:241px;width:335px;height:20px;background:#d8effd;"></div>
<div class="t" style="left:111px;width:54.5px;text-align:right;top:242.18px;font-size:14.2px;color:#2c2c32;transform:scaleX(0.975);transform-origin:100% 0;">12:30</div>
<div style="position:absolute;left:0px;top:261px;width:335px;height:20px;background:#dcf9e0;"></div>
<div class="t" style="left:111px;width:54.5px;text-align:right;top:262.18px;font-size:14.2px;color:#2c2c32;transform:scaleX(0.975);transform-origin:100% 0;">13:00</div>
<div style="position:absolute;left:0px;top:281px;width:335px;height:20px;background:#d8effd;"></div>
<div class="t" style="left:111px;width:54.5px;text-align:right;top:282.18px;font-size:14.2px;color:#2c2c32;transform:scaleX(0.975);transform-origin:100% 0;">13:30</div>
<div style="position:absolute;left:0px;top:301px;width:335px;height:20px;background:#dcf9e0;"></div>
<div class="t" style="left:111px;width:54.5px;text-align:right;top:302.18px;font-size:14.2px;color:#2c2c32;transform:scaleX(0.975);transform-origin:100% 0;">14:00</div>
<div style="position:absolute;left:0px;top:321px;width:335px;height:20px;background:#d8effd;"></div>
<div class="t" style="left:111px;width:54.5px;text-align:right;top:322.18px;font-size:14.2px;color:#2c2c32;transform:scaleX(0.975);transform-origin:100% 0;">14:30</div>
<div style="position:absolute;left:0px;top:341px;width:335px;height:20px;background:#dcf9e0;"></div>
<div class="t" style="left:111px;width:54.5px;text-align:right;top:342.18px;font-size:14.2px;color:#2c2c32;transform:scaleX(0.975);transform-origin:100% 0;">15:00</div>
<div style="position:absolute;left:0px;top:361px;width:335px;height:20px;background:#d8effd;"></div>
<div class="t" style="left:111px;width:54.5px;text-align:right;top:362.18px;font-size:14.2px;color:#2c2c32;transform:scaleX(0.975);transform-origin:100% 0;">15:30</div>
<div style="position:absolute;left:0px;top:381px;width:335px;height:20px;background:#dcf9e0;"></div>
<div class="t" style="left:111px;width:54.5px;text-align:right;top:382.18px;font-size:14.2px;color:#2c2c32;transform:scaleX(0.975);transform-origin:100% 0;">16:00</div>
<div style="position:absolute;left:0px;top:401px;width:335px;height:20px;background:#d8effd;"></div>
<div class="t" style="left:111px;width:54.5px;text-align:right;top:402.18px;font-size:14.2px;color:#2c2c32;transform:scaleX(0.975);transform-origin:100% 0;">16:30</div>
<div style="position:absolute;left:0px;top:421px;width:335px;height:20px;background:#dcf9e0;"></div>
<div class="t" style="left:111px;width:54.5px;text-align:right;top:422.18px;font-size:14.2px;color:#2c2c32;transform:scaleX(0.975);transform-origin:100% 0;">17:00</div>
<div style="position:absolute;left:0px;top:441px;width:335px;height:20px;background:#d8effd;"></div>
<div class="t" style="left:111px;width:54.5px;text-align:right;top:442.18px;font-size:14.2px;color:#2c2c32;transform:scaleX(0.975);transform-origin:100% 0;">17:30</div>
<div style="position:absolute;left:0px;top:461px;width:32px;height:34px;background:#dcf9e0;"></div>
<div style="position:absolute;left:32px;top:461px;width:303px;height:34px;background:#017cc4;"></div>
<div class="t" style="left:33.50px;top:462.38px;font-size:14.2px;color:#eef4fa;transform:scaleX(0.935);transform-origin:0 0;">24.08.2024</div>
<div class="t" style="left:234.00px;top:462.38px;font-size:14.2px;color:#eef4fa;transform:scaleX(0.935);transform-origin:0 0;">Šeštadienis</div>
<div style="position:absolute;left:0px;top:495px;width:335px;height:20px;background:#d8effd;"></div>
<div class="t" style="left:111px;width:54.5px;text-align:right;top:496.18px;font-size:14.2px;color:#2c2c32;transform:scaleX(0.975);transform-origin:100% 0;">09:00</div>
<div style="position:absolute;left:0px;top:515px;width:335px;height:20px;background:#dcf9e0;"></div>
<div class="t" style="left:111px;width:54.5px;text-align:right;top:516.18px;font-size:14.2px;color:#2c2c32;transform:scaleX(0.975);transform-origin:100% 0;">09:30</div>
<div style="position:absolute;left:0px;top:535px;width:335px;height:20px;background:#d8effd;"></div>
<div style="position:absolute;left:131px;top:535px;width:204px;height:20px;background:#fffbbf;"></div>
<div class="t" style="left:111px;width:54.5px;text-align:right;top:536.18px;font-size:14.2px;color:#cc1a1a;transform:scaleX(0.975);transform-origin:100% 0;">10:00</div>
<div class="t" style="left:181.00px;top:536.18px;font-size:14.2px;color:#cc1a1a;transform:scaleX(0.935);transform-origin:0 0;">000085</div>
<div class="t" style="left:234.00px;top:536.18px;font-size:14.2px;color:#cc1a1a;transform:scaleX(0.935);transform-origin:0 0;">Pacientas 6</div>
<div style="position:absolute;left:0px;top:555px;width:335px;height:20px;background:#dcf9e0;"></div>
<div class="t" style="left:111px;width:54.5px;text-align:right;top:556.18px;font-size:14.2px;color:#2c2c32;transform:scaleX(0.975);transform-origin:100% 0;">10:30</div>
<div style="position:absolute;left:0px;top:575px;width:335px;height:20px;background:#d8effd;"></div>
<div class="t" style="left:111px;width:54.5px;text-align:right;top:576.18px;font-size:14.2px;color:#2c2c32;transform:scaleX(0.975);transform-origin:100% 0;">11:00</div>
<div style="position:absolute;left:0px;top:595px;width:335px;height:20px;background:#dcf9e0;"></div>
<div class="t" style="left:111px;width:54.5px;text-align:right;top:596.18px;font-size:14.2px;color:#2c2c32;transform:scaleX(0.975);transform-origin:100% 0;">11:30</div>
<div style="position:absolute;left:0px;top:615px;width:335px;height:20px;background:#d8effd;"></div>
<div class="t" style="left:111px;width:54.5px;text-align:right;top:616.18px;font-size:14.2px;color:#2c2c32;transform:scaleX(0.975);transform-origin:100% 0;">12:00</div>
<div style="position:absolute;left:0px;top:635px;width:335px;height:20px;background:#dcf9e0;"></div>
<div class="t" style="left:111px;width:54.5px;text-align:right;top:636.18px;font-size:14.2px;color:#2c2c32;transform:scaleX(0.975);transform-origin:100% 0;">12:30</div>
<div style="position:absolute;left:0px;top:655px;width:335px;height:20px;background:#d8effd;"></div>
<div class="t" style="left:111px;width:54.5px;text-align:right;top:656.18px;font-size:14.2px;color:#2c2c32;transform:scaleX(0.975);transform-origin:100% 0;">13:00</div>
<svg style="position:absolute;left:-1px;top:-1px" width="357" height="673"><circle cx="16.4" cy="84.6" r="7.249999999999999" fill="none" stroke="#4a5058" stroke-width="1.9"/><path d="M13.7 82.19999999999999 L18.799999999999997 87.3" stroke="#4a5058" stroke-width="1.8" fill="none"/><path d="M19.299999999999997 82.19999999999999 V87.5 H13.999999999999998" stroke="#4a5058" stroke-width="2" fill="none"/><g transform="translate(63,142)"><path d="M6.6 5.6 Q8.2 13.8 19.2 17.6" stroke="#0a0a0a" stroke-width="4.8" fill="none" stroke-linecap="round"/><path d="M9.2 2.4 L11.6 5.0" stroke="#ee3b2b" stroke-width="3.4" stroke-linecap="round"/><path d="M19.4 12.6 L21.6 15.2" stroke="#ee3b2b" stroke-width="3.4" stroke-linecap="round"/></g><g transform="translate(97.8,150.8)"><path d="M-4 -4 L4 4 M4 -4 L-4 4" stroke="#f7a21a" stroke-width="3.6" stroke-linecap="round"/><path d="M0 -5.5 L0 5.5 M-5.5 0 L5.5 0" stroke="#f7b21a" stroke-width="1.6"/><path d="M-3.6 -3.6 L3.6 3.6 M3.6 -3.6 L-3.6 3.6" stroke="#ffe820" stroke-width="2"/><circle r="2.6" fill="#fff11a"/></g><path d="M112.4 150.6 L115.60000000000001 154.8 L121.0 147" stroke="#0c0c0c" stroke-width="2.7" fill="none" stroke-linejoin="miter"/><g transform="translate(63,182)"><path d="M6.6 5.6 Q8.2 13.8 19.2 17.6" stroke="#0a0a0a" stroke-width="4.8" fill="none" stroke-linecap="round"/><path d="M9.2 2.4 L11.6 5.0" stroke="#ee3b2b" stroke-width="3.4" stroke-linecap="round"/><path d="M19.4 12.6 L21.6 15.2" stroke="#ee3b2b" stroke-width="3.4" stroke-linecap="round"/></g><path d="M112.4 190.6 L115.60000000000001 194.8 L121.0 187" stroke="#0c0c0c" stroke-width="2.7" fill="none" stroke-linejoin="miter"/><circle cx="16.4" cy="478.6" r="7.249999999999999" fill="none" stroke="#4a5058" stroke-width="1.9"/><path d="M13.7 476.20000000000005 L18.799999999999997 481.3" stroke="#4a5058" stroke-width="1.8" fill="none"/><path d="M19.299999999999997 476.20000000000005 V481.5 H13.999999999999998" stroke="#4a5058" stroke-width="2" fill="none"/><g transform="translate(63,536)"><path d="M6.6 5.6 Q8.2 13.8 19.2 17.6" stroke="#0a0a0a" stroke-width="4.8" fill="none" stroke-linecap="round"/><path d="M9.2 2.4 L11.6 5.0" stroke="#ee3b2b" stroke-width="3.4" stroke-linecap="round"/><path d="M19.4 12.6 L21.6 15.2" stroke="#ee3b2b" stroke-width="3.4" stroke-linecap="round"/></g></svg>
<div style="position:absolute;left:336px;top:0px;width:20px;height:673px;background:#fff;"></div>
<div style="position:absolute;left:341px;top:21px;width:10px;height:483px;background:#bdbdbd;"></div>
<svg style="position:absolute;left:336px;top:-1px" width="20" height="673"><path d="M5.5 14 L14.5 14 L10 9.5 Z" fill="#888"/><path d="M6 661 L14 661 L10 665 Z" fill="#777"/></svg>
</div>
<div style="position:absolute;left:775px;top:165px;width:356px;height:672px;border:2px solid #c0c0c0;border-right-color:#d4d4d4;border-bottom:1px solid #c4c4c4;background:#fff;overflow:hidden;">
<div style="position:absolute;left:0px;top:0px;width:335px;height:32px;background:#f5f5f5;"></div>
<div style="position:absolute;left:0px;top:32px;width:335px;height:1px;background:#cfcfcf;"></div>
<div style="position:absolute;left:0px;top:33px;width:335px;height:33px;background:#f5f5f5;"></div>
<div style="position:absolute;left:0px;top:66px;width:335px;height:1px;background:#cfcfcf;"></div>
<div style="position:absolute;left:130px;top:33px;width:1px;height:33px;background:#cfcfcf;"></div>
<div style="position:absolute;left:180px;top:33px;width:1px;height:33px;background:#cfcfcf;"></div>
<div style="position:absolute;left:234px;top:33px;width:1px;height:33px;background:#cfcfcf;"></div>
<div style="position:absolute;left:335px;top:0px;width:1px;height:673px;background:#c4c4c8;"></div>
<div class="t" style="left:80.50px;top:9.58px;font-size:14.2px;color:#2c2c32;transform:scaleX(0.952);transform-origin:0 0;">2. Stomatologas 2 (Odontologija)</div>
<div class="t" style="left:36.00px;top:43.38px;font-size:14.2px;color:#2c2c32;transform:scaleX(0.935);transform-origin:0 0;">Data</div>
<svg style="position:absolute;left:109px;top:48px" width="11" height="7"><path d="M0.5 6 L10.5 6 L5.5 0.5 Z" fill="#666"/></svg>
<div class="t" style="left:136.00px;top:43.38px;font-size:14.2px;color:#2c2c32;transform:scaleX(0.935);transform-origin:0 0;">Laikas</div>
<div class="t" style="left:203.00px;top:43.38px;font-size:14.2px;color:#2c2c32;transform:scaleX(0.935);transform-origin:0 0;">#</div>
<div class="t" style="left:272.00px;top:43.38px;font-size:14.2px;color:#2c2c32;transform:scaleX(0.935);transform-origin:0 0;">Klientas</div>
<div style="position:absolute;left:0px;top:67px;width:32px;height:34px;background:#d8effd;"></div>
<div style="position:absolute;left:32px;top:67px;width:303px;height:34px;background:#017cc4;"></div>
<div class="t" style="left:33.50px;top:68.38px;font-size:14.2px;color:#00e6f6;transform:scaleX(0.935);transform-origin:0 0;">23.08.2024</div>
<div class="t" style="left:234.00px;top:68.38px;font-size:14.2px;color:#00e6f6;transform:scaleX(0.935);transform-origin:0 0;">Penktadienis</div>
<div style="position:absolute;left:0px;top:101px;width:335px;height:20px;background:#dcf9e0;"></div>
<div class="t" style="left:111px;width:54.5px;text-align:right;top:102.18px;font-size:14.2px;color:#2c2c32;transform:scaleX(0.975);transform-origin:100% 0;">09:00</div>
<div style="position:absolute;left:0px;top:121px;width:335px;height:20px;background:#d8effd;"></div>
<div class="t" style="left:111px;width:54.5px;text-align:right;top:122.18px;font-size:14.2px;color:#2c2c32;transform:scaleX(0.975);transform-origin:100% 0;">09:30</div>
<div style="position:absolute;left:0px;top:141px;width:335px;height:20px;background:#dcf9e0;"></div>
<div class="t" style="left:111px;width:54.5px;text-align:right;top:142.18px;font-size:14.2px;color:#2c2c32;transform:scaleX(0.975);transform-origin:100% 0;">10:00</div>
<div style="position:absolute;left:0px;top:161px;width:335px;height:20px;background:#d8effd;"></div>
<div class="t" style="left:111px;width:54.5px;text-align:right;top:162.18px;font-size:14.2px;color:#2c2c32;transform:scaleX(0.975);transform-origin:100% 0;">10:30</div>
<div style="position:absolute;left:0px;top:181px;width:335px;height:20px;background:#dcf9e0;"></div>
<div class="t" style="left:111px;width:54.5px;text-align:right;top:182.18px;font-size:14.2px;color:#2c2c32;transform:scaleX(0.975);transform-origin:100% 0;">11:00</div>
<div style="position:absolute;left:0px;top:201px;width:335px;height:20px;background:#d8effd;"></div>
<div class="t" style="left:111px;width:54.5px;text-align:right;top:202.18px;font-size:14.2px;color:#2c2c32;transform:scaleX(0.975);transform-origin:100% 0;">11:30</div>
<div style="position:absolute;left:0px;top:221px;width:335px;height:20px;background:#dcf9e0;"></div>
<div class="t" style="left:111px;width:54.5px;text-align:right;top:222.18px;font-size:14.2px;color:#2c2c32;transform:scaleX(0.975);transform-origin:100% 0;">12:00</div>
<div style="position:absolute;left:0px;top:241px;width:335px;height:20px;background:#d8effd;"></div>
<div class="t" style="left:111px;width:54.5px;text-align:right;top:242.18px;font-size:14.2px;color:#2c2c32;transform:scaleX(0.975);transform-origin:100% 0;">12:30</div>
<div style="position:absolute;left:0px;top:261px;width:335px;height:20px;background:#dcf9e0;"></div>
<div class="t" style="left:111px;width:54.5px;text-align:right;top:262.18px;font-size:14.2px;color:#2c2c32;transform:scaleX(0.975);transform-origin:100% 0;">13:00</div>
<div style="position:absolute;left:0px;top:281px;width:335px;height:20px;background:#d8effd;"></div>
<div class="t" style="left:111px;width:54.5px;text-align:right;top:282.18px;font-size:14.2px;color:#2c2c32;transform:scaleX(0.975);transform-origin:100% 0;">13:30</div>
<div style="position:absolute;left:0px;top:301px;width:335px;height:20px;background:#dcf9e0;"></div>
<div style="position:absolute;left:131px;top:301px;width:204px;height:20px;background:#fffbbf;"></div>
<div class="t" style="left:111px;width:54.5px;text-align:right;top:302.18px;font-size:14.2px;color:#2c2c32;transform:scaleX(0.975);transform-origin:100% 0;">14:00</div>
<div class="t" style="left:181.00px;top:302.18px;font-size:14.2px;color:#2c2c32;transform:scaleX(0.935);transform-origin:0 0;">000082</div>
<div class="t" style="left:234.00px;top:302.18px;font-size:14.2px;color:#2c2c32;transform:scaleX(0.935);transform-origin:0 0;">Pacientas 3</div>
<div style="position:absolute;left:0px;top:321px;width:335px;height:20px;background:#d8effd;"></div>
<div class="t" style="left:111px;width:54.5px;text-align:right;top:322.18px;font-size:14.2px;color:#2c2c32;transform:scaleX(0.975);transform-origin:100% 0;">14:30</div>
<div style="position:absolute;left:0px;top:341px;width:335px;height:20px;background:#dcf9e0;"></div>
<div class="t" style="left:111px;width:54.5px;text-align:right;top:342.18px;font-size:14.2px;color:#2c2c32;transform:scaleX(0.975);transform-origin:100% 0;">15:00</div>
<div style="position:absolute;left:0px;top:361px;width:335px;height:20px;background:#d8effd;"></div>
<div class="t" style="left:111px;width:54.5px;text-align:right;top:362.18px;font-size:14.2px;color:#2c2c32;transform:scaleX(0.975);transform-origin:100% 0;">15:30</div>
<div style="position:absolute;left:0px;top:381px;width:335px;height:20px;background:#dcf9e0;"></div>
<div class="t" style="left:111px;width:54.5px;text-align:right;top:382.18px;font-size:14.2px;color:#2c2c32;transform:scaleX(0.975);transform-origin:100% 0;">16:00</div>
<div style="position:absolute;left:0px;top:401px;width:335px;height:20px;background:#d8effd;"></div>
<div class="t" style="left:111px;width:54.5px;text-align:right;top:402.18px;font-size:14.2px;color:#2c2c32;transform:scaleX(0.975);transform-origin:100% 0;">16:30</div>
<div style="position:absolute;left:0px;top:421px;width:335px;height:20px;background:#dcf9e0;"></div>
<div class="t" style="left:111px;width:54.5px;text-align:right;top:422.18px;font-size:14.2px;color:#2c2c32;transform:scaleX(0.975);transform-origin:100% 0;">17:00</div>
<div style="position:absolute;left:0px;top:441px;width:335px;height:20px;background:#d8effd;"></div>
<div class="t" style="left:111px;width:54.5px;text-align:right;top:442.18px;font-size:14.2px;color:#2c2c32;transform:scaleX(0.975);transform-origin:100% 0;">17:30</div>
<div style="position:absolute;left:0px;top:461px;width:32px;height:34px;background:#dcf9e0;"></div>
<div style="position:absolute;left:32px;top:461px;width:303px;height:34px;background:#017cc4;"></div>
<div class="t" style="left:33.50px;top:462.38px;font-size:14.2px;color:#eef4fa;transform:scaleX(0.935);transform-origin:0 0;">24.08.2024</div>
<div class="t" style="left:234.00px;top:462.38px;font-size:14.2px;color:#eef4fa;transform:scaleX(0.935);transform-origin:0 0;">Šeštadienis</div>
<div style="position:absolute;left:0px;top:495px;width:335px;height:20px;background:#d8effd;"></div>
<div class="t" style="left:111px;width:54.5px;text-align:right;top:496.18px;font-size:14.2px;color:#2c2c32;transform:scaleX(0.975);transform-origin:100% 0;">09:00</div>
<div style="position:absolute;left:0px;top:515px;width:335px;height:20px;background:#dcf9e0;"></div>
<div class="t" style="left:111px;width:54.5px;text-align:right;top:516.18px;font-size:14.2px;color:#2c2c32;transform:scaleX(0.975);transform-origin:100% 0;">09:30</div>
<div style="position:absolute;left:0px;top:535px;width:335px;height:20px;background:#d8effd;"></div>
<div class="t" style="left:111px;width:54.5px;text-align:right;top:536.18px;font-size:14.2px;color:#2c2c32;transform:scaleX(0.975);transform-origin:100% 0;">10:00</div>
<div style="position:absolute;left:0px;top:555px;width:335px;height:20px;background:#dcf9e0;"></div>
<div class="t" style="left:111px;width:54.5px;text-align:right;top:556.18px;font-size:14.2px;color:#2c2c32;transform:scaleX(0.975);transform-origin:100% 0;">10:30</div>
<div style="position:absolute;left:0px;top:575px;width:335px;height:20px;background:#d8effd;"></div>
<div class="t" style="left:111px;width:54.5px;text-align:right;top:576.18px;font-size:14.2px;color:#2c2c32;transform:scaleX(0.975);transform-origin:100% 0;">11:00</div>
<div style="position:absolute;left:0px;top:595px;width:335px;height:20px;background:#dcf9e0;"></div>
<div class="t" style="left:111px;width:54.5px;text-align:right;top:596.18px;font-size:14.2px;color:#2c2c32;transform:scaleX(0.975);transform-origin:100% 0;">11:30</div>
<div style="position:absolute;left:0px;top:615px;width:335px;height:20px;background:#d8effd;"></div>
<div class="t" style="left:111px;width:54.5px;text-align:right;top:616.18px;font-size:14.2px;color:#2c2c32;transform:scaleX(0.975);transform-origin:100% 0;">12:00</div>
<div style="position:absolute;left:0px;top:635px;width:335px;height:20px;background:#dcf9e0;"></div>
<div class="t" style="left:111px;width:54.5px;text-align:right;top:636.18px;font-size:14.2px;color:#2c2c32;transform:scaleX(0.975);transform-origin:100% 0;">12:30</div>
<div style="position:absolute;left:0px;top:655px;width:335px;height:20px;background:#d8effd;"></div>
<div class="t" style="left:111px;width:54.5px;text-align:right;top:656.18px;font-size:14.2px;color:#2c2c32;transform:scaleX(0.975);transform-origin:100% 0;">13:00</div>
<svg style="position:absolute;left:-1px;top:-1px" width="357" height="673"><circle cx="16.4" cy="84.6" r="7.249999999999999" fill="none" stroke="#4a5058" stroke-width="1.9"/><path d="M13.7 82.19999999999999 L18.799999999999997 87.3" stroke="#4a5058" stroke-width="1.8" fill="none"/><path d="M19.299999999999997 82.19999999999999 V87.5 H13.999999999999998" stroke="#4a5058" stroke-width="2" fill="none"/><g transform="translate(63,302)"><path d="M6.6 5.6 Q8.2 13.8 19.2 17.6" stroke="#0a0a0a" stroke-width="4.8" fill="none" stroke-linecap="round"/><path d="M9.2 2.4 L11.6 5.0" stroke="#ee3b2b" stroke-width="3.4" stroke-linecap="round"/><path d="M19.4 12.6 L21.6 15.2" stroke="#ee3b2b" stroke-width="3.4" stroke-linecap="round"/></g><g transform="translate(88,302.2)"><path d="M1.2 5.2 L5.2 1.2" stroke="#8a8a8a" stroke-width="2.4" stroke-linecap="round"/><path d="M3.2 3.2 L6.5 6.5" stroke="#9a9a9a" stroke-width="2.6"/><path d="M4.8 8.8 L8.8 4.8 L16.5 12.5 L12.5 16.5 Z" fill="#d6d6d6" stroke="#8a8a8a" stroke-width="1"/><path d="M7.5 8.5 L9.5 6.5" stroke="#fff" stroke-width="1.6"/><circle cx="10.2" cy="10.2" r="1.3" fill="#555"/><path d="M14.5 14.5 L19.2 19.2" stroke="#8a8a8a" stroke-width="1.6" stroke-linecap="round"/></g><path d="M112.4 310.6 L115.60000000000001 314.8 L121.0 307" stroke="#0c0c0c" stroke-width="2.7" fill="none" stroke-linejoin="miter"/><circle cx="16.4" cy="478.6" r="7.249999999999999" fill="none" stroke="#4a5058" stroke-width="1.9"/><path d="M13.7 476.20000000000005 L18.799999999999997 481.3" stroke="#4a5058" stroke-width="1.8" fill="none"/><path d="M19.299999999999997 476.20000000000005 V481.5 H13.999999999999998" stroke="#4a5058" stroke-width="2" fill="none"/></svg>
<div style="position:absolute;left:336px;top:0px;width:20px;height:673px;background:#fff;"></div>
<div style="position:absolute;left:341px;top:21px;width:10px;height:483px;background:#bdbdbd;"></div>
<svg style="position:absolute;left:336px;top:-1px" width="20" height="673"><path d="M5.5 14 L14.5 14 L10 9.5 Z" fill="#888"/><path d="M6 661 L14 661 L10 665 Z" fill="#777"/></svg>
</div>
<div style="position:absolute;left:1143px;top:165px;width:356px;height:672px;border:2px solid #c0c0c0;border-right-color:#d4d4d4;border-bottom:1px solid #c4c4c4;background:#fff;overflow:hidden;">
<div style="position:absolute;left:0px;top:0px;width:335px;height:32px;background:#f5f5f5;"></div>
<div style="position:absolute;left:0px;top:32px;width:335px;height:1px;background:#cfcfcf;"></div>
<div style="position:absolute;left:0px;top:33px;width:335px;height:33px;background:#f5f5f5;"></div>
<div style="position:absolute;left:0px;top:66px;width:335px;height:1px;background:#cfcfcf;"></div>
<div style="position:absolute;left:130px;top:33px;width:1px;height:33px;background:#cfcfcf;"></div>
<div style="position:absolute;left:180px;top:33px;width:1px;height:33px;background:#cfcfcf;"></div>
<div style="position:absolute;left:234px;top:33px;width:1px;height:33px;background:#cfcfcf;"></div>
<div style="position:absolute;left:335px;top:0px;width:1px;height:673px;background:#c4c4c8;"></div>
<div class="t" style="left:80.50px;top:9.58px;font-size:14.2px;color:#2c2c32;transform:scaleX(0.952);transform-origin:0 0;">3. Stomatologas 4 (Odontologija)</div>
<div class="t" style="left:36.00px;top:43.38px;font-size:14.2px;color:#2c2c32;transform:scaleX(0.935);transform-origin:0 0;">Data</div>
<svg style="position:absolute;left:109px;top:48px" width="11" height="7"><path d="M0.5 6 L10.5 6 L5.5 0.5 Z" fill="#666"/></svg>
<div class="t" style="left:136.00px;top:43.38px;font-size:14.2px;color:#2c2c32;transform:scaleX(0.935);transform-origin:0 0;">Laikas</div>
<div class="t" style="left:203.00px;top:43.38px;font-size:14.2px;color:#2c2c32;transform:scaleX(0.935);transform-origin:0 0;">#</div>
<div class="t" style="left:272.00px;top:43.38px;font-size:14.2px;color:#2c2c32;transform:scaleX(0.935);transform-origin:0 0;">Klientas</div>
<div style="position:absolute;left:0px;top:67px;width:32px;height:34px;background:#d8effd;"></div>
<div style="position:absolute;left:32px;top:67px;width:303px;height:34px;background:#017cc4;"></div>
<div class="t" style="left:33.50px;top:68.38px;font-size:14.2px;color:#00e6f6;transform:scaleX(0.935);transform-origin:0 0;">23.08.2024</div>
<div class="t" style="left:234.00px;top:68.38px;font-size:14.2px;color:#00e6f6;transform:scaleX(0.935);transform-origin:0 0;">Penktadienis</div>
<div style="position:absolute;left:0px;top:101px;width:335px;height:20px;background:#dcf9e0;"></div>
<div class="t" style="left:111px;width:54.5px;text-align:right;top:102.18px;font-size:14.2px;color:#2c2c32;transform:scaleX(0.975);transform-origin:100% 0;">09:00</div>
<div style="position:absolute;left:0px;top:121px;width:335px;height:20px;background:#d8effd;"></div>
<div class="t" style="left:111px;width:54.5px;text-align:right;top:122.18px;font-size:14.2px;color:#2c2c32;transform:scaleX(0.975);transform-origin:100% 0;">09:30</div>
<div style="position:absolute;left:0px;top:141px;width:335px;height:20px;background:#dcf9e0;"></div>
<div class="t" style="left:111px;width:54.5px;text-align:right;top:142.18px;font-size:14.2px;color:#2c2c32;transform:scaleX(0.975);transform-origin:100% 0;">10:00</div>
<div style="position:absolute;left:0px;top:161px;width:335px;height:20px;background:#d8effd;"></div>
<div class="t" style="left:111px;width:54.5px;text-align:right;top:162.18px;font-size:14.2px;color:#2c2c32;transform:scaleX(0.975);transform-origin:100% 0;">10:30</div>
<div style="position:absolute;left:0px;top:181px;width:335px;height:20px;background:#dcf9e0;"></div>
<div class="t" style="left:111px;width:54.5px;text-align:right;top:182.18px;font-size:14.2px;color:#2c2c32;transform:scaleX(0.975);transform-origin:100% 0;">11:00</div>
<div style="position:absolute;left:0px;top:201px;width:335px;height:20px;background:#d8effd;"></div>
<div style="position:absolute;left:131px;top:201px;width:204px;height:20px;background:#fcd6e6;"></div>
<div class="t" style="left:111px;width:54.5px;text-align:right;top:202.18px;font-size:14.2px;color:#2c2c32;transform:scaleX(0.975);transform-origin:100% 0;">11:30</div>
<div class="t" style="left:181.00px;top:202.18px;font-size:14.2px;color:#2c2c32;transform:scaleX(0.935);transform-origin:0 0;">000083</div>
<div class="t" style="left:234.00px;top:202.18px;font-size:14.2px;color:#2c2c32;transform:scaleX(0.935);transform-origin:0 0;">Pacientas 4</div>
<div style="position:absolute;left:0px;top:221px;width:335px;height:20px;background:#dcf9e0;"></div>
<div class="t" style="left:111px;width:54.5px;text-align:right;top:222.18px;font-size:14.2px;color:#2c2c32;transform:scaleX(0.975);transform-origin:100% 0;">12:00</div>
<div style="position:absolute;left:0px;top:241px;width:335px;height:20px;background:#d8effd;"></div>
<div style="position:absolute;left:131px;top:241px;width:204px;height:20px;background:#fffbbf;"></div>
<div class="t" style="left:111px;width:54.5px;text-align:right;top:242.18px;font-size:14.2px;color:#2c2c32;transform:scaleX(0.975);transform-origin:100% 0;">12:30</div>
<div class="t" style="left:181.00px;top:242.18px;font-size:14.2px;color:#2c2c32;transform:scaleX(0.935);transform-origin:0 0;">000084</div>
<div class="t" style="left:234.00px;top:242.18px;font-size:14.2px;color:#2c2c32;transform:scaleX(0.935);transform-origin:0 0;">Pacientas 5</div>
<div style="position:absolute;left:0px;top:261px;width:335px;height:20px;background:#dcf9e0;"></div>
<div class="t" style="left:111px;width:54.5px;text-align:right;top:262.18px;font-size:14.2px;color:#2c2c32;transform:scaleX(0.975);transform-origin:100% 0;">13:00</div>
<div style="position:absolute;left:0px;top:281px;width:335px;height:20px;background:#d8effd;"></div>
<div class="t" style="left:111px;width:54.5px;text-align:right;top:282.18px;font-size:14.2px;color:#2c2c32;transform:scaleX(0.975);transform-origin:100% 0;">13:30</div>
<div style="position:absolute;left:0px;top:301px;width:335px;height:20px;background:#dcf9e0;"></div>
<div class="t" style="left:111px;width:54.5px;text-align:right;top:302.18px;font-size:14.2px;color:#2c2c32;transform:scaleX(0.975);transform-origin:100% 0;">14:00</div>
<div style="position:absolute;left:0px;top:321px;width:335px;height:20px;background:#d8effd;"></div>
<div class="t" style="left:111px;width:54.5px;text-align:right;top:322.18px;font-size:14.2px;color:#2c2c32;transform:scaleX(0.975);transform-origin:100% 0;">14:30</div>
<div style="position:absolute;left:0px;top:341px;width:335px;height:20px;background:#dcf9e0;"></div>
<div class="t" style="left:111px;width:54.5px;text-align:right;top:342.18px;font-size:14.2px;color:#2c2c32;transform:scaleX(0.975);transform-origin:100% 0;">15:00</div>
<div style="position:absolute;left:0px;top:361px;width:335px;height:20px;background:#d8effd;"></div>
<div class="t" style="left:111px;width:54.5px;text-align:right;top:362.18px;font-size:14.2px;color:#2c2c32;transform:scaleX(0.975);transform-origin:100% 0;">15:30</div>
<div style="position:absolute;left:0px;top:381px;width:335px;height:20px;background:#dcf9e0;"></div>
<div class="t" style="left:111px;width:54.5px;text-align:right;top:382.18px;font-size:14.2px;color:#2c2c32;transform:scaleX(0.975);transform-origin:100% 0;">16:00</div>
<div style="position:absolute;left:0px;top:401px;width:335px;height:20px;background:#d8effd;"></div>
<div class="t" style="left:111px;width:54.5px;text-align:right;top:402.18px;font-size:14.2px;color:#2c2c32;transform:scaleX(0.975);transform-origin:100% 0;">16:30</div>
<div style="position:absolute;left:0px;top:421px;width:335px;height:20px;background:#dcf9e0;"></div>
<div class="t" style="left:111px;width:54.5px;text-align:right;top:422.18px;font-size:14.2px;color:#2c2c32;transform:scaleX(0.975);transform-origin:100% 0;">17:00</div>
<div style="position:absolute;left:0px;top:441px;width:335px;height:20px;background:#d8effd;"></div>
<div class="t" style="left:111px;width:54.5px;text-align:right;top:442.18px;font-size:14.2px;color:#2c2c32;transform:scaleX(0.975);transform-origin:100% 0;">17:30</div>
<div style="position:absolute;left:0px;top:461px;width:32px;height:34px;background:#dcf9e0;"></div>
<div style="position:absolute;left:32px;top:461px;width:303px;height:34px;background:#017cc4;"></div>
<div class="t" style="left:33.50px;top:462.38px;font-size:14.2px;color:#eef4fa;transform:scaleX(0.935);transform-origin:0 0;">24.08.2024</div>
<div class="t" style="left:234.00px;top:462.38px;font-size:14.2px;color:#eef4fa;transform:scaleX(0.935);transform-origin:0 0;">Šeštadienis</div>
<div style="position:absolute;left:0px;top:495px;width:335px;height:20px;background:#d8effd;"></div>
<div class="t" style="left:111px;width:54.5px;text-align:right;top:496.18px;font-size:14.2px;color:#2c2c32;transform:scaleX(0.975);transform-origin:100% 0;">09:00</div>
<div style="position:absolute;left:0px;top:515px;width:335px;height:20px;background:#dcf9e0;"></div>
<div class="t" style="left:111px;width:54.5px;text-align:right;top:516.18px;font-size:14.2px;color:#2c2c32;transform:scaleX(0.975);transform-origin:100% 0;">09:30</div>
<div style="position:absolute;left:0px;top:535px;width:335px;height:20px;background:#d8effd;"></div>
<div style="position:absolute;left:131px;top:535px;width:204px;height:20px;background:#fffbbf;"></div>
<div class="t" style="left:111px;width:54.5px;text-align:right;top:536.18px;font-size:14.2px;color:#cc1a1a;transform:scaleX(0.975);transform-origin:100% 0;">10:00</div>
<div class="t" style="left:181.00px;top:536.18px;font-size:14.2px;color:#cc1a1a;transform:scaleX(0.935);transform-origin:0 0;">000086</div>
<div class="t" style="left:234.00px;top:536.18px;font-size:14.2px;color:#cc1a1a;transform:scaleX(0.935);transform-origin:0 0;">Pacientas 7</div>
<div style="position:absolute;left:0px;top:555px;width:335px;height:20px;background:#dcf9e0;"></div>
<div class="t" style="left:111px;width:54.5px;text-align:right;top:556.18px;font-size:14.2px;color:#2c2c32;transform:scaleX(0.975);transform-origin:100% 0;">10:30</div>
<div style="position:absolute;left:0px;top:575px;width:335px;height:20px;background:#d8effd;"></div>
<div class="t" style="left:111px;width:54.5px;text-align:right;top:576.18px;font-size:14.2px;color:#2c2c32;transform:scaleX(0.975);transform-origin:100% 0;">11:00</div>
<div style="position:absolute;left:0px;top:595px;width:335px;height:20px;background:#dcf9e0;"></div>
<div class="t" style="left:111px;width:54.5px;text-align:right;top:596.18px;font-size:14.2px;color:#2c2c32;transform:scaleX(0.975);transform-origin:100% 0;">11:30</div>
<div style="position:absolute;left:0px;top:615px;width:335px;height:20px;background:#d8effd;"></div>
<div class="t" style="left:111px;width:54.5px;text-align:right;top:616.18px;font-size:14.2px;color:#2c2c32;transform:scaleX(0.975);transform-origin:100% 0;">12:00</div>
<div style="position:absolute;left:0px;top:635px;width:335px;height:20px;background:#dcf9e0;"></div>
<div class="t" style="left:111px;width:54.5px;text-align:right;top:636.18px;font-size:14.2px;color:#2c2c32;transform:scaleX(0.975);transform-origin:100% 0;">12:30</div>
<div style="position:absolute;left:0px;top:655px;width:335px;height:20px;background:#d8effd;"></div>
<div class="t" style="left:111px;width:54.5px;text-align:right;top:656.18px;font-size:14.2px;color:#2c2c32;transform:scaleX(0.975);transform-origin:100% 0;">13:00</div>
<svg style="position:absolute;left:-1px;top:-1px" width="357" height="673"><circle cx="16.4" cy="84.6" r="7.249999999999999" fill="none" stroke="#4a5058" stroke-width="1.9"/><path d="M13.7 82.19999999999999 L18.799999999999997 87.3" stroke="#4a5058" stroke-width="1.8" fill="none"/><path d="M19.299999999999997 82.19999999999999 V87.5 H13.999999999999998" stroke="#4a5058" stroke-width="2" fill="none"/><g transform="translate(63,202)"><path d="M6.6 5.6 Q8.2 13.8 19.2 17.6" stroke="#0a0a0a" stroke-width="4.8" fill="none" stroke-linecap="round"/><path d="M9.2 2.4 L11.6 5.0" stroke="#ee3b2b" stroke-width="3.4" stroke-linecap="round"/><path d="M19.4 12.6 L21.6 15.2" stroke="#ee3b2b" stroke-width="3.4" stroke-linecap="round"/></g><g transform="translate(63,242)"><path d="M6.6 5.6 Q8.2 13.8 19.2 17.6" stroke="#0a0a0a" stroke-width="4.8" fill="none" stroke-linecap="round"/><path d="M9.2 2.4 L11.6 5.0" stroke="#ee3b2b" stroke-width="3.4" stroke-linecap="round"/><path d="M19.4 12.6 L21.6 15.2" stroke="#ee3b2b" stroke-width="3.4" stroke-linecap="round"/></g><g transform="translate(96.6,251.3)"><path d="M-9 0 Q0 -8.5 9 0 Q0 8.5 -9 0 Z" fill="#f8f8fa"/><path d="M-9 0 Q0 -8.5 9 0" stroke="#c08a50" stroke-width="1.4" fill="none"/><path d="M-9 0 Q0 8.5 9 0" stroke="#6a7ac0" stroke-width="1.3" fill="none"/><circle r="4.6" fill="#7088b0"/><circle r="3" fill="#8aa2c8"/><circle r="1.7" fill="#1a2030"/></g><path d="M112.4 250.6 L115.60000000000001 254.8 L121.0 247" stroke="#0c0c0c" stroke-width="2.7" fill="none" stroke-linejoin="miter"/><circle cx="16.4" cy="478.6" r="7.249999999999999" fill="none" stroke="#4a5058" stroke-width="1.9"/><path d="M13.7 476.20000000000005 L18.799999999999997 481.3" stroke="#4a5058" stroke-width="1.8" fill="none"/><path d="M19.299999999999997 476.20000000000005 V481.5 H13.999999999999998" stroke="#4a5058" stroke-width="2" fill="none"/><g transform="translate(97.8,544.8)"><path d="M-4 -4 L4 4 M4 -4 L-4 4" stroke="#f7a21a" stroke-width="3.6" stroke-linecap="round"/><path d="M0 -5.5 L0 5.5 M-5.5 0 L5.5 0" stroke="#f7b21a" stroke-width="1.6"/><path d="M-3.6 -3.6 L3.6 3.6 M3.6 -3.6 L-3.6 3.6" stroke="#ffe820" stroke-width="2"/><circle r="2.6" fill="#fff11a"/></g></svg>
<div style="position:absolute;left:336px;top:0px;width:20px;height:673px;background:#fff;"></div>
<div style="position:absolute;left:341px;top:21px;width:10px;height:483px;background:#bdbdbd;"></div>
<svg style="position:absolute;left:336px;top:-1px" width="20" height="673"><path d="M5.5 14 L14.5 14 L10 9.5 Z" fill="#888"/><path d="M6 661 L14 661 L10 665 Z" fill="#777"/></svg>
</div>
<div style="position:absolute;left:23px;top:871px;width:179px;height:53px;border:1px solid #c8c8c8;border-bottom:none;background:#fff;"></div>
<div style="position:absolute;left:23px;top:924px;width:181px;height:3px;background:#0a9cf2;"></div>
<svg style="position:absolute;left:39px;top:885px;" width="32" height="28" viewBox="0 0 32 28"><rect x="1.5" y="1.5" width="29" height="25" rx="2" fill="#e4eaf6" stroke="#6a7fb8" stroke-width="1.3"/><rect x="2" y="2" width="28" height="5" fill="#8aa6de"/><circle cx="27" cy="4.5" r="1" fill="#e04040"/></svg>
<div class="t" style="left:81.5px;top:891.48px;font-size:14.2px;color:#1a8fe0;font-weight:normal;transform:scaleX(0.95);transform-origin:0 0;">Registracija</div>
<svg style="position:absolute;left:169px;top:891px;" width="16" height="16" viewBox="0 0 16 16"><path d="M3 3 L12 12 M12 3 L3 12" stroke="#1a8fe0" stroke-width="2.2"/></svg>
<svg style="position:absolute;left:27px;top:929px;" width="22" height="22" viewBox="0 0 22 22"><circle cx="11" cy="11" r="10" fill="#4577b8"/><circle cx="11" cy="6.3" r="1.8" fill="#fff"/><rect x="9.3" y="9" width="3.4" height="8" fill="#fff"/></svg>
<div class="t" style="left:70.5px;top:933.48px;font-size:14.2px;color:#333;font-weight:normal;transform:scaleX(0.97);transform-origin:0 0;">7.2.9045.10 Standard</div>
<div style="position:absolute;left:229px;top:931px;width:1px;height:18px;background:#b8b8b8;"></div>
<div style="position:absolute;left:399px;top:931px;width:1px;height:18px;background:#b8b8b8;"></div>
<div style="position:absolute;left:578px;top:931px;width:1px;height:18px;background:#b8b8b8;"></div>
<div style="position:absolute;left:727px;top:931px;width:1px;height:18px;background:#b8b8b8;"></div>
<div style="position:absolute;left:876px;top:931px;width:1px;height:18px;background:#b8b8b8;"></div>
<div style="position:absolute;left:1493px;top:931px;width:1px;height:18px;background:#b8b8b8;"></div>
<svg style="position:absolute;left:242px;top:929px;" width="20" height="22" viewBox="0 0 20 22"><defs><linearGradient id="db" x1="0" y1="0" x2="1" y2="0"><stop offset="0" stop-color="#e6a040"/><stop offset="0.5" stop-color="#fde0a0"/><stop offset="1" stop-color="#d08830"/></linearGradient></defs><rect x="2" y="2" width="15" height="18" rx="3" fill="url(#db)" stroke="#c07a28" stroke-width="0.8"/><path d="M2 8 H17 M2 14 H17" stroke="#c07a28" stroke-width="0.8"/></svg>
<div class="t" style="left:281px;top:933.48px;font-size:14.2px;color:#333;font-weight:normal;transform:scaleX(0.985);transform-origin:0 0;">localhost (utf8)</div>
<svg style="position:absolute;left:411px;top:929px;" width="20" height="20" viewBox="0 0 20 20"><g transform="translate(1,1) scale(1.0)"><path d="M0.8 14 Q0.8 10.4 9 10.4 Q17.4 10.4 17.4 14 Q17.4 17.2 9 17.2 Q0.8 17.2 0.8 14 Z" fill="#86c040" stroke="#5a8e2c" stroke-width="0.9"/><path d="M3 14.5 Q9 12 15.5 14.5" stroke="#a8dc60" stroke-width="1.2" fill="none"/><path d="M4.2 6.8 Q4 0.3 9.2 0.3 Q14.4 0.3 14.2 6.8 Q14 10 12 10.8 Q9 12 6.3 10.8 Q4.4 10 4.2 6.8 Z" fill="#b8683a"/><path d="M6.2 5 Q9 3.8 12.2 5 Q12.6 9.5 9.2 10.6 Q6 9.5 6.2 5 Z" fill="#f6d2a4"/></g></svg>
<div class="t" style="left:451px;top:933.48px;font-size:14.2px;color:#333;font-weight:normal;transform:scaleX(0.93);transform-origin:0 0;">NIKOLAY (MAIN)</div>
<svg style="position:absolute;left:590px;top:929px;" width="20" height="22" viewBox="0 0 20 22"><rect x="1.5" y="2.5" width="16" height="16" fill="#fff" stroke="#4a6ab0" stroke-width="1"/><rect x="2" y="3" width="15" height="3" fill="#e05050"/><text x="9.5" y="16" font-family="Liberation Sans" font-size="9" font-weight="bold" fill="#2a4a90" text-anchor="middle">31</text></svg>
<div class="t" style="left:631.5px;top:933.48px;font-size:14.2px;color:#333;font-weight:normal;transform:scaleX(0.97);transform-origin:0 0;">23.08.2024</div>
<div class="t" style="left:761.5px;top:933.48px;font-size:14.2px;color:#333;font-weight:normal;transform:scaleX(0.995);transform-origin:0 0;">09:45:09:610</div>
<svg style="position:absolute;left:1505px;top:932px;" width="20" height="20" viewBox="0 0 20 20"><circle cx="14.400000000000091" cy="5.100000000000023" r="1.45" fill="#707070"/><circle cx="9.299999999999955" cy="10.399999999999977" r="1.45" fill="#707070"/><circle cx="14.400000000000091" cy="10.399999999999977" r="1.45" fill="#707070"/><circle cx="4.2000000000000455" cy="15.299999999999955" r="1.45" fill="#707070"/><circle cx="9.299999999999955" cy="15.299999999999955" r="1.45" fill="#707070"/><circle cx="14.400000000000091" cy="15.299999999999955" r="1.45" fill="#707070"/></svg>
</body></html>
